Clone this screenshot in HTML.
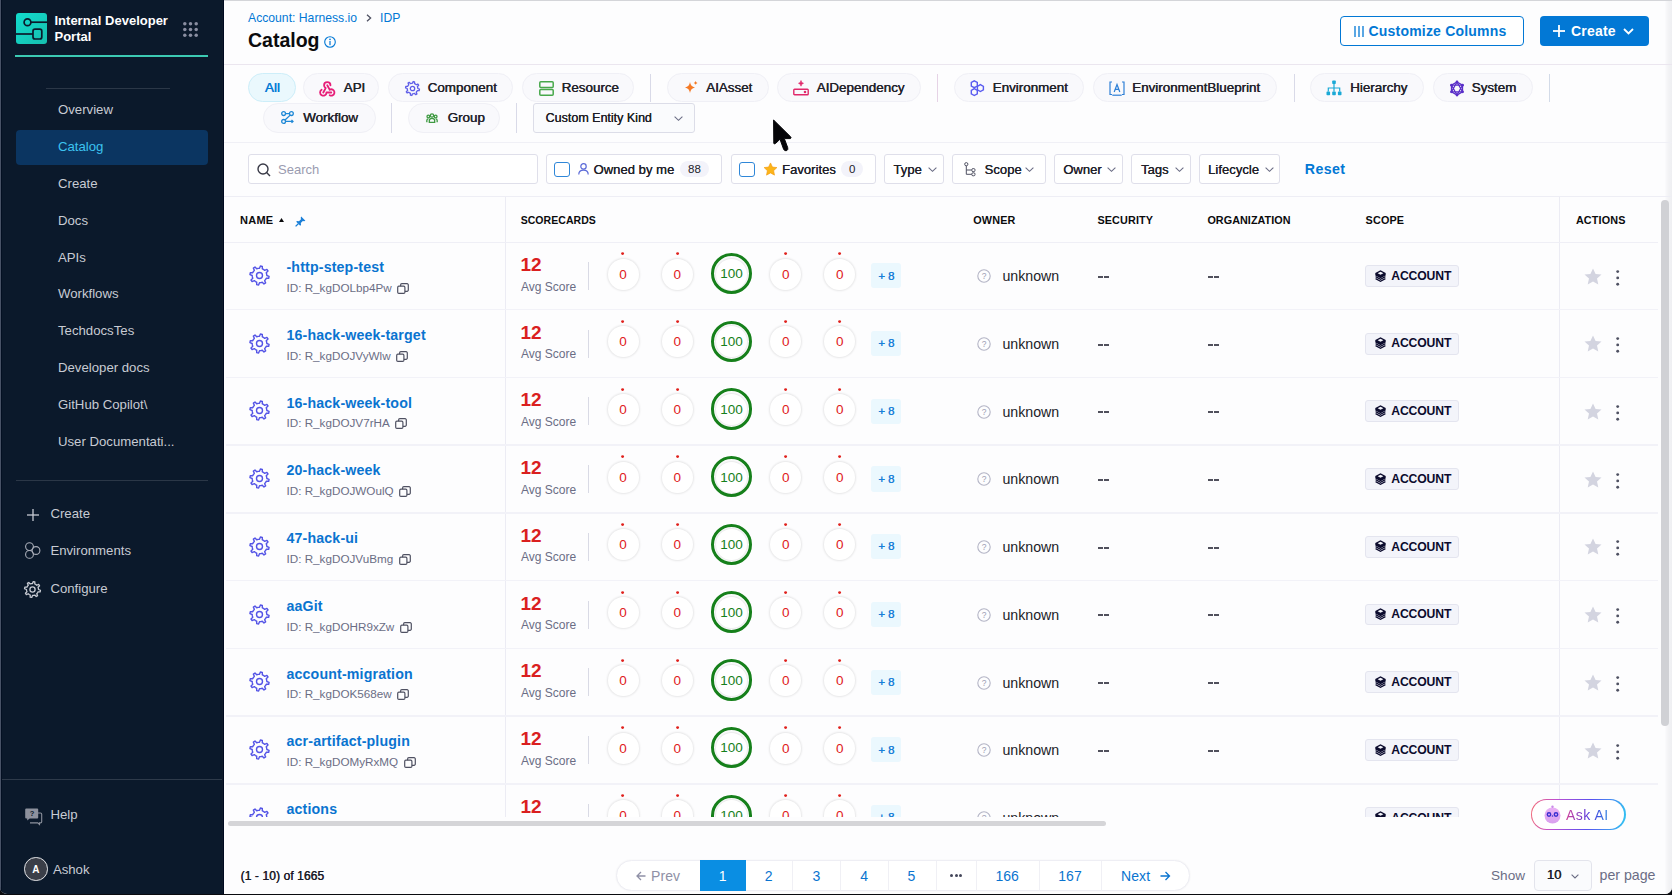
<!DOCTYPE html>
<html><head><meta charset="utf-8">
<style>
*{box-sizing:border-box;margin:0;padding:0}
html,body{width:1672px;height:895px;overflow:hidden;background:#0a0b0f;font-family:"Liberation Sans",sans-serif}
.abs{position:absolute}
.t{position:absolute;white-space:nowrap;line-height:1}
#win{position:absolute;left:0;top:0;width:1672px;height:894px;background:#fdfdfe;border-radius:0 0 7px 7px;overflow:hidden}
#side{position:absolute;left:0;top:0;width:224px;height:894px;background:#0b192b}
svg{position:absolute;overflow:visible}
</style></head><body>
<div id="win">
<div id="side">
<svg style="left:16px;top:13px" width="31" height="31" viewBox="0 0 31 31">
 <defs><linearGradient id="lg" x1="0" y1="0" x2="1" y2="1"><stop offset="0" stop-color="#12dccd"/><stop offset="1" stop-color="#16bfae"/></linearGradient></defs>
 <rect x="0" y="0" width="31" height="31" rx="3" fill="url(#lg)"/>
 <circle cx="11.5" cy="9.2" r="3.4" fill="none" stroke="#0b192b" stroke-width="1.7"/>
 <line x1="14.9" y1="9.2" x2="31" y2="9.2" stroke="#0b192b" stroke-width="1.7"/>
 <rect x="17" y="16.2" width="8.8" height="9.8" rx="2" fill="none" stroke="#0b192b" stroke-width="1.7"/>
 <line x1="0" y1="21" x2="17" y2="21" stroke="#0b192b" stroke-width="1.7"/>
</svg>
<div class="t" style="left:54.50px;top:14.30px;font-size:13px;color:#ffffff;font-weight:bold;">Internal Developer</div>
<div class="t" style="left:54.50px;top:30.10px;font-size:13px;color:#ffffff;font-weight:bold;">Portal</div>
<svg style="left:183px;top:22px" width="15" height="15" viewBox="0 0 15 15" fill="#8a8ea1"><circle cx="1.8" cy="1.8" r="1.75"/><circle cx="1.8" cy="7.5" r="1.75"/><circle cx="1.8" cy="13.2" r="1.75"/><circle cx="7.5" cy="1.8" r="1.75"/><circle cx="7.5" cy="7.5" r="1.75"/><circle cx="7.5" cy="13.2" r="1.75"/><circle cx="13.2" cy="1.8" r="1.75"/><circle cx="13.2" cy="7.5" r="1.75"/><circle cx="13.2" cy="13.2" r="1.75"/></svg>
<div class="abs" style="left:15px;top:55px;width:193px;height:2px;background:#3ccab3"></div>
<div class="abs" style="left:46px;top:88px;width:124px;height:1px;background:#2b3747"></div>
<div class="abs" style="left:15.5px;top:129.6px;width:192.5px;height:35px;background:#0b3561;border-radius:4px"></div>
<div class="t" style="left:58.00px;top:103.43px;font-size:13.2px;color:#c8cbd3;">Overview</div>
<div class="t" style="left:58.00px;top:140.23px;font-size:13.2px;color:#3cc3f0;">Catalog</div>
<div class="t" style="left:58.00px;top:177.03px;font-size:13.2px;color:#c8cbd3;">Create</div>
<div class="t" style="left:58.00px;top:213.83px;font-size:13.2px;color:#c8cbd3;">Docs</div>
<div class="t" style="left:58.00px;top:250.63px;font-size:13.2px;color:#c8cbd3;">APIs</div>
<div class="t" style="left:58.00px;top:287.43px;font-size:13.2px;color:#c8cbd3;">Workflows</div>
<div class="t" style="left:58.00px;top:324.23px;font-size:13.2px;color:#c8cbd3;">TechdocsTes</div>
<div class="t" style="left:58.00px;top:361.03px;font-size:13.2px;color:#c8cbd3;">Developer docs</div>
<div class="t" style="left:58.00px;top:397.83px;font-size:13.2px;color:#c8cbd3;">GitHub Copilot\</div>
<div class="t" style="left:58.00px;top:434.63px;font-size:13.2px;color:#c8cbd3;">User Documentati...</div>
<div class="abs" style="left:15.5px;top:480px;width:192.5px;height:1px;background:#2b3747"></div>
<svg style="left:26px;top:508px" width="14" height="14" viewBox="0 0 14 14" stroke="#c8cbd3" stroke-width="1.3"><line x1="7" y1="1" x2="7" y2="13"/><line x1="1" y1="7" x2="13" y2="7"/></svg>
<div class="t" style="left:50.40px;top:507.23px;font-size:13.2px;color:#c8cbd3;">Create</div>
<svg style="left:24px;top:542px" width="17" height="17" viewBox="0 0 17 17" fill="none" stroke="#a9adb8" stroke-width="1.1"><circle cx="5.5" cy="4.6" r="3.9"/><circle cx="12" cy="8.5" r="3.9"/><circle cx="5.5" cy="12.4" r="3.9"/></svg>
<div class="t" style="left:50.40px;top:544.03px;font-size:13.2px;color:#c8cbd3;">Environments</div>
<svg style="left:24px;top:581px" width="17" height="17" viewBox="0 0 17 17"><path d="M14.50,8.50 L16.46,9.25 L16.15,10.85 L14.04,10.80 L13.49,11.83 L12.74,12.74 L13.60,14.66 L12.24,15.57 L10.80,14.04 L9.67,14.38 L8.50,14.50 L7.75,16.46 L6.15,16.15 L6.20,14.04 L5.17,13.49 L4.26,12.74 L2.34,13.60 L1.43,12.24 L2.96,10.80 L2.62,9.67 L2.50,8.50 L0.54,7.75 L0.85,6.15 L2.96,6.20 L3.51,5.17 L4.26,4.26 L3.40,2.34 L4.76,1.43 L6.20,2.96 L7.33,2.62 L8.50,2.50 L9.25,0.54 L10.85,0.85 L10.80,2.96 L11.83,3.51 L12.74,4.26 L14.66,3.40 L15.57,4.76 L14.04,6.20 L14.38,7.33Z" fill="none" stroke="#c8cbd3" stroke-width="1.3" stroke-linejoin="round"/><circle cx="8.5" cy="8.5" r="2.6" fill="none" stroke="#c8cbd3" stroke-width="1.3"/></svg>
<div class="t" style="left:50.40px;top:582.33px;font-size:13.2px;color:#c8cbd3;">Configure</div>
<div class="abs" style="left:0px;top:778.5px;width:224px;height:1px;background:#2e3a4a"></div>
<svg style="left:25px;top:808px" width="18" height="17" viewBox="0 0 18 17">
 <path d="M5,5 h10.5 a1.2,1.2 0 0 1 1.2,1.2 v7.5 a1.2,1.2 0 0 1 -1.2,1.2 h-1 v1.6 l-1.8,-1.6 h-7.7" fill="none" stroke="#8d919d" stroke-width="1.1"/>
 <path d="M1.2,0.5 h11 a1,1 0 0 1 1,1 v8 a1,1 0 0 1 -1,1 h-7.5 l-2.5,2 v-2 h-1 a1,1 0 0 1 -1,-1 v-8 a1,1 0 0 1 1,-1z" fill="#8d919d"/>
 <text x="7" y="8.3" font-size="7.5" font-weight="bold" text-anchor="middle" fill="#0b192b" font-family="Liberation Sans">?</text>
</svg>
<div class="t" style="left:50.50px;top:808.23px;font-size:13.2px;color:#c8cbd3;">Help</div>
<div class="abs" style="left:24px;top:857px;width:23.5px;height:23.5px;border-radius:50%;border:1.6px solid #e6e7ea;background:#3a3e48"></div>
<div class="t" style="left:-64.25px;width:200px;text-align:center;top:864.53px;font-size:10px;color:#ffffff;font-weight:bold;">A</div>
<div class="t" style="left:52.90px;top:862.63px;font-size:13.2px;color:#c8cbd3;">Ashok</div>
<div class="abs" style="left:0px;top:0px;width:1px;height:894px;background:#485266"></div>
<div class="abs" style="left:1px;top:0px;width:1px;height:894px;background:#030f22"></div>
<div class="abs" style="left:221.5px;top:0px;width:1.5px;height:894px;background:#0f1b2a"></div>
<div class="abs" style="left:223px;top:0px;width:1px;height:894px;background:#000a20"></div>
</div>
<div class="abs" style="left:224px;top:0px;width:1448px;height:1px;background:#d4d5d9"></div>
<div class="abs" style="left:1664.5px;top:1px;width:7.5px;height:893px;background:linear-gradient(90deg,#fbfbfd,#f4f4f6 40%,#eeeff2)"></div>
<div class="t" style="left:248.00px;top:11.87px;font-size:12.2px;color:#0278d5;">Account: Harness.io</div>
<svg style="left:366px;top:14px" width="6" height="8" viewBox="0 0 6 8"><path d="M1,0.8 L4.6,4 L1,7.2" fill="none" stroke="#4f5162" stroke-width="1.3"/></svg>
<div class="t" style="left:380.00px;top:11.87px;font-size:12.2px;color:#0278d5;">IDP</div>
<div class="t" style="left:248.00px;top:30.59px;font-size:19.5px;color:#0b0b0d;font-weight:bold;">Catalog</div>
<svg style="left:323.5px;top:35.5px" width="12" height="12" viewBox="0 0 12 12"><circle cx="6" cy="6" r="5.3" fill="none" stroke="#0278d5" stroke-width="1.1"/><circle cx="6" cy="3.4" r="0.8" fill="#0278d5"/><rect x="5.4" y="5" width="1.2" height="4.2" fill="#0278d5"/></svg>
<div class="abs" style="left:1340.3px;top:15.5px;width:184px;height:30.5px;border:1.5px solid #0278d5;border-radius:4px;background:#fff"></div>
<svg style="left:1353.5px;top:25.5px" width="10" height="11" viewBox="0 0 10 11" stroke="#0278d5" stroke-width="1.3"><line x1="1" y1="0" x2="1" y2="11"/><line x1="5" y1="0" x2="5" y2="11"/><line x1="9" y1="0" x2="9" y2="11"/></svg>
<div class="t" style="left:1368.50px;top:23.75px;font-size:14px;color:#0278d5;font-weight:bold;letter-spacing:0.2px;">Customize Columns</div>
<div class="abs" style="left:1540.2px;top:15.5px;width:108.5px;height:30.5px;background:#0278d5;border-radius:4px"></div>
<svg style="left:1553px;top:24.5px" width="12" height="12" viewBox="0 0 12 12" stroke="#fff" stroke-width="1.8"><line x1="6" y1="0" x2="6" y2="12"/><line x1="0" y1="6" x2="12" y2="6"/></svg>
<div class="t" style="left:1571.00px;top:23.75px;font-size:14px;color:#ffffff;font-weight:bold;letter-spacing:0.2px;">Create</div>
<svg style="left:1623px;top:27.5px" width="11" height="7" viewBox="0 0 11 7"><path d="M1,1 L5.5,5.5 L10,1" fill="none" stroke="#fff" stroke-width="1.8"/></svg>
<div class="abs" style="left:224px;top:64px;width:1448px;height:1.2px;background:#ebe6ef"></div>
<div class="abs" style="left:248px;top:73.2px;width:48px;height:29.0px;background:#eaf8fd;border:1px solid #cdeef9;border-radius:16px"></div>
<div class="t" style="left:264.80px;top:81.46px;font-size:13.4px;color:#0278d5;text-shadow:0.45px 0 0 currentColor;">All</div>
<div class="abs" style="left:303.3px;top:73.2px;width:76.19999999999999px;height:29.0px;background:#f9f9fc;border:1px solid #f0f0f6;border-radius:16px"></div>
<svg style="left:320px;top:80.8px" width="15" height="14.5" viewBox="3 2.6 18.6 18.2" fill="none" stroke="#e71e78" stroke-width="2.3" stroke-linecap="round" stroke-linejoin="round"><path d="M4.876 13.61a4 4 0 1 0 6.124 3.39h6"/><path d="M15.066 20.502a4 4 0 1 0 1.934 -7.502c-.706 0 -1.424 .179 -2 .5l-3 -5.5"/><path d="M16 8a4 4 0 1 0 -8 0c0 1.506 .77 2.818 2 3.5l-3 5.5"/></svg>
<div class="t" style="left:343.50px;top:81.46px;font-size:13.4px;color:#22222a;text-shadow:0.45px 0 0 currentColor;">API</div>
<div class="abs" style="left:387.7px;top:73.2px;width:125.69999999999999px;height:29.0px;background:#f9f9fc;border:1px solid #f0f0f6;border-radius:16px"></div>
<svg style="left:404.5px;top:80.5px" width="15" height="15" viewBox="0 0 15 15"><path d="M12.80,7.50 L14.47,8.16 L14.19,9.56 L12.40,9.53 L11.91,10.44 L11.25,11.25 L11.96,12.89 L10.78,13.69 L9.53,12.40 L8.53,12.70 L7.50,12.80 L6.84,14.47 L5.44,14.19 L5.47,12.40 L4.56,11.91 L3.75,11.25 L2.11,11.96 L1.31,10.78 L2.60,9.53 L2.30,8.53 L2.20,7.50 L0.53,6.84 L0.81,5.44 L2.60,5.47 L3.09,4.56 L3.75,3.75 L3.04,2.11 L4.22,1.31 L5.47,2.60 L6.47,2.30 L7.50,2.20 L8.16,0.53 L9.56,0.81 L9.53,2.60 L10.44,3.09 L11.25,3.75 L12.89,3.04 L13.69,4.22 L12.40,5.47 L12.70,6.47Z" fill="none" stroke="#5f5ee8" stroke-width="1.3" stroke-linejoin="round"/><circle cx="7.5" cy="7.5" r="2.2" fill="none" stroke="#5f5ee8" stroke-width="1.3"/></svg>
<div class="t" style="left:427.50px;top:81.46px;font-size:13.4px;color:#22222a;text-shadow:0.45px 0 0 currentColor;">Component</div>
<div class="abs" style="left:522px;top:73.2px;width:111.60000000000002px;height:29.0px;background:#f9f9fc;border:1px solid #f0f0f6;border-radius:16px"></div>
<svg style="left:538.5px;top:80.5px" width="15" height="15" viewBox="0 0 15 15" fill="none" stroke="#47a84a" stroke-width="1.5"><rect x="0.8" y="0.8" width="13.4" height="5.8" rx="1"/><rect x="0.8" y="8.4" width="13.4" height="5.8" rx="1"/></svg>
<div class="t" style="left:561.50px;top:81.46px;font-size:13.4px;color:#22222a;text-shadow:0.45px 0 0 currentColor;">Resource</div>
<div class="abs" style="left:650.2px;top:73.7px;width:1px;height:28.299999999999997px;background:#d9dae8"></div>
<div class="abs" style="left:666.6px;top:73.2px;width:102.19999999999993px;height:29.0px;background:#f9f9fc;border:1px solid #f0f0f6;border-radius:16px"></div>
<svg style="left:684.5px;top:81px" width="13" height="13" viewBox="0 0 13 13" fill="#f57a25"><path d="M5,1 Q5.6,5.6 10,6.5 Q5.6,7.4 5,12 Q4.4,7.4 0,6.5 Q4.4,5.6 5,1Z"/><path d="M10.6,0 Q10.9,1.6 12.5,1.9 Q10.9,2.2 10.6,3.8 Q10.3,2.2 8.7,1.9 Q10.3,1.6 10.6,0Z"/></svg>
<div class="t" style="left:706.00px;top:81.46px;font-size:13.4px;color:#22222a;text-shadow:0.45px 0 0 currentColor;">AIAsset</div>
<div class="abs" style="left:776.9px;top:73.2px;width:144.10000000000002px;height:29.0px;background:#f9f9fc;border:1px solid #f0f0f6;border-radius:16px"></div>
<svg style="left:792.5px;top:79.5px" width="16" height="16" viewBox="0 0 16 16" fill="none" stroke="#e0286a" stroke-width="1.4"><rect x="0.8" y="9.2" width="14.4" height="5.6" rx="0.8"/><circle cx="12" cy="12" r="0.6" fill="#e0286a"/><path d="M8,0.5 Q8.3,3 10.5,3.3 Q8.3,3.6 8,6.2 Q7.7,3.6 5.5,3.3 Q7.7,3 8,0.5Z" fill="#e0286a" stroke-width="0.6"/></svg>
<div class="t" style="left:816.50px;top:81.46px;font-size:13.4px;color:#22222a;text-shadow:0.45px 0 0 currentColor;">AIDependency</div>
<div class="abs" style="left:936.9px;top:73.7px;width:1px;height:28.299999999999997px;background:#e6d3e6"></div>
<div class="abs" style="left:953.5px;top:73.2px;width:130.29999999999995px;height:29.0px;background:#f9f9fc;border:1px solid #f0f0f6;border-radius:16px"></div>
<svg style="left:969px;top:79.5px" width="17" height="17" viewBox="0 0 17 17" fill="none" stroke="#5a5cf0" stroke-width="1.4"><path d="M5.3,0.8 L8.3,2.5 L8.3,6 L5.3,7.7 L2.3,6 L2.3,2.5Z"/><path d="M11.4,4.6 L14.4,6.3 L14.4,9.8 L11.4,11.5 L8.4,9.8 L8.4,6.3Z"/><path d="M5.3,8.6 L8.3,10.3 L8.3,13.8 L5.3,15.5 L2.3,13.8 L2.3,10.3Z"/></svg>
<div class="t" style="left:992.50px;top:81.46px;font-size:13.4px;color:#22222a;text-shadow:0.45px 0 0 currentColor;">Environment</div>
<div class="abs" style="left:1092.5px;top:73.2px;width:184.9000000000001px;height:29.0px;background:#f9f9fc;border:1px solid #f0f0f6;border-radius:16px"></div>
<svg style="left:1108.5px;top:80.5px" width="16" height="15" viewBox="0 0 16 15" fill="none" stroke="#2d7fd6" stroke-width="1.2"><path d="M3,1 H1 V13.5 H3 M13,1 H15 V13.5 H13"/><path d="M5.2,11 L8,3.5 L10.8,11 M6.2,8.4 H9.8"/><path d="M3.3,14.2 L12.7,14.2"/></svg>
<div class="t" style="left:1132.00px;top:81.46px;font-size:13.4px;color:#22222a;text-shadow:0.45px 0 0 currentColor;">EnvironmentBlueprint</div>
<div class="abs" style="left:1293.7px;top:73.7px;width:1px;height:28.299999999999997px;background:#d9dae8"></div>
<div class="abs" style="left:1310px;top:73.2px;width:113.70000000000005px;height:29.0px;background:#f9f9fc;border:1px solid #f0f0f6;border-radius:16px"></div>
<svg style="left:1326px;top:80px" width="16" height="16" viewBox="0 0 16 16" fill="#1aa9d6"><rect x="6.2" y="0.5" width="3.6" height="3.6" rx="0.8"/><rect x="0.5" y="11.6" width="3.6" height="3.6" rx="0.8"/><rect x="6.2" y="11.6" width="3.6" height="3.6" rx="0.8"/><rect x="11.9" y="11.6" width="3.6" height="3.6" rx="0.8"/><path d="M8,4 V11.6 M2.3,11.6 V8 H13.7 V11.6" fill="none" stroke="#1aa9d6" stroke-width="1.2"/></svg>
<div class="t" style="left:1350.00px;top:81.46px;font-size:13.4px;color:#22222a;text-shadow:0.45px 0 0 currentColor;">Hierarchy</div>
<div class="abs" style="left:1432.5px;top:73.2px;width:100.0px;height:29.0px;background:#f9f9fc;border:1px solid #f0f0f6;border-radius:16px"></div>
<svg style="left:1449.5px;top:80.5px" width="14" height="15" viewBox="0 0 14 15" fill="none" stroke="#5a2fc8" stroke-width="1.3"><path d="M7,1 L12.5,4.2 L12.5,10.8 L7,14 L1.5,10.8 L1.5,4.2Z"/><path d="M7,1 L12.5,10.8 L1.5,10.8Z M7,14 L1.5,4.2 L12.5,4.2Z"/><g fill="#5a2fc8" stroke="none"><circle cx="7" cy="1" r="1.4"/><circle cx="12.5" cy="4.2" r="1.4"/><circle cx="12.5" cy="10.8" r="1.4"/><circle cx="7" cy="14" r="1.4"/><circle cx="1.5" cy="10.8" r="1.4"/><circle cx="1.5" cy="4.2" r="1.4"/></g></svg>
<div class="t" style="left:1471.50px;top:81.46px;font-size:13.4px;color:#22222a;text-shadow:0.45px 0 0 currentColor;">System</div>
<div class="abs" style="left:1548.9px;top:73.7px;width:1px;height:28.299999999999997px;background:#d3dbe8"></div>
<div class="abs" style="left:263.4px;top:102.5px;width:112.30000000000001px;height:30.19999999999999px;background:#f9f9fc;border:1px solid #f0f0f6;border-radius:16px"></div>
<svg style="left:281px;top:110.5px" width="13" height="13" viewBox="0 0 13 13" fill="none" stroke="#1e88d6" stroke-width="1.3"><circle cx="2.6" cy="2.6" r="1.9"/><circle cx="10.4" cy="2.6" r="1.9"/><circle cx="2.6" cy="10.4" r="1.9"/><path d="M4.5,2.6 H8.5 M9.2,4.1 L4,9 M4.5,10.4 H12 M10.5,8.9 L12,10.4 L10.5,11.9"/></svg>
<div class="t" style="left:303.00px;top:111.26px;font-size:13.4px;color:#22222a;text-shadow:0.45px 0 0 currentColor;">Workflow</div>
<div class="abs" style="left:391.1px;top:103px;width:1px;height:30px;background:#d9dae8"></div>
<div class="abs" style="left:408.3px;top:102.5px;width:92.19999999999999px;height:30.19999999999999px;background:#f9f9fc;border:1px solid #f0f0f6;border-radius:16px"></div>
<svg style="left:426px;top:113px" width="12" height="10" viewBox="0 0 14 12" fill="none" stroke="#3f9a42" stroke-width="1.6"><circle cx="7" cy="3" r="2"/><circle cx="2.6" cy="4.2" r="1.6"/><circle cx="11.4" cy="4.2" r="1.6"/><path d="M3.8,11.2 V9 Q3.8,6.4 7,6.4 Q10.2,6.4 10.2,9 V11.2Z"/><path d="M0.8,11 V9 Q0.8,7 2.6,7 M13.2,11 V9 Q13.2,7 11.4,7"/></svg>
<div class="t" style="left:447.50px;top:111.26px;font-size:13.4px;color:#22222a;text-shadow:0.45px 0 0 currentColor;">Group</div>
<div class="abs" style="left:515.9px;top:103px;width:1px;height:30px;background:#d9dae8"></div>
<div class="abs" style="left:533.4px;top:102.5px;width:161.2px;height:30.2px;background:#fafbfd;border:1px solid #dcdde8;border-radius:3px"></div>
<div class="t" style="left:545.50px;top:112.02px;font-size:12.5px;color:#1c1c24;text-shadow:0.25px 0 0 currentColor;">Custom Entity Kind</div>
<svg style="left:674px;top:116px" width="9" height="5" viewBox="0 0 9 5"><path d="M0.6,0.6 L4.5,4.3 L8.4,0.6" fill="none" stroke="#6b6d85" stroke-width="1.1"/></svg>
<div class="abs" style="left:224px;top:141.5px;width:1448px;height:1px;background:#f0f0f6"></div>
<div class="abs" style="left:248px;top:154px;width:289.6px;height:30.2px;background:#fff;border:1px solid #dfdfea;border-radius:3px"></div>
<svg style="left:256.5px;top:162.5px" width="14" height="14" viewBox="0 0 14 14" fill="none" stroke="#383946" stroke-width="1.4"><circle cx="6" cy="6" r="5"/><line x1="9.6" y1="9.6" x2="13" y2="13"/></svg>
<div class="t" style="left:278.00px;top:162.80px;font-size:13px;color:#9a9bb0;">Search</div>
<div class="abs" style="left:546.1px;top:154px;width:175.5px;height:30.2px;background:#fff;border:1px solid #dfdfea;border-radius:3px"></div>
<div class="abs" style="left:554.2px;top:161.5px;width:16px;height:15px;border:1.5px solid #2f87d8;border-radius:3px;background:#fff"></div>
<svg style="left:578px;top:162.5px" width="11" height="12" viewBox="0 0 11 12" fill="none" stroke="#5b6ad8" stroke-width="1.2"><circle cx="5.5" cy="3.4" r="2.7"/><path d="M0.8,11.5 Q0.8,7.2 5.5,7.2 Q10.2,7.2 10.2,11.5"/></svg>
<div class="t" style="left:593.50px;top:162.80px;font-size:13px;color:#22222a;letter-spacing:0.05px;text-shadow:0.2px 0 0 currentColor;">Owned by me</div>
<div class="abs" style="left:679.9px;top:161px;width:29.3px;height:16px;background:#f3f3fa;border-radius:8px"></div>
<div class="t" style="left:594.50px;width:200px;text-align:center;top:163.57px;font-size:11.5px;color:#22222a;">88</div>
<div class="abs" style="left:730.5px;top:154px;width:145px;height:30.2px;background:#fff;border:1px solid #dfdfea;border-radius:3px"></div>
<div class="abs" style="left:739px;top:161.5px;width:15.5px;height:15px;border:1.5px solid #2f87d8;border-radius:3px;background:#fff"></div>
<svg style="left:762.5px;top:161.5px" width="15" height="15" viewBox="0 0 24 24"><path d="M12,1.5 L15.1,8.1 L22.3,8.9 L17,13.8 L18.4,21 L12,17.4 L5.6,21 L7,13.8 L1.7,8.9 L8.9,8.1Z" fill="#fcb519" stroke="#f29a12" stroke-width="1"/></svg>
<div class="t" style="left:782.00px;top:162.80px;font-size:13px;color:#22222a;letter-spacing:0.05px;text-shadow:0.2px 0 0 currentColor;">Favorites</div>
<div class="abs" style="left:841px;top:161px;width:22.3px;height:16px;background:#f3f3fa;border-radius:8px"></div>
<div class="t" style="left:752.20px;width:200px;text-align:center;top:163.57px;font-size:11.5px;color:#22222a;">0</div>
<div class="abs" style="left:884.3px;top:154px;width:59.40000000000009px;height:30.2px;background:#fff;border:1px solid #dfdfea;border-radius:3px"></div>
<div class="t" style="left:893.40px;top:162.80px;font-size:13px;color:#22222a;letter-spacing:0.05px;text-shadow:0.2px 0 0 currentColor;">Type</div>
<svg style="left:928px;top:167px" width="9" height="5" viewBox="0 0 9 5"><path d="M0.6,0.6 L4.5,4.3 L8.4,0.6" fill="none" stroke="#6b6d85" stroke-width="1.1"/></svg>
<div class="abs" style="left:952.3px;top:154px;width:93.29999999999995px;height:30.2px;background:#fff;border:1px solid #dfdfea;border-radius:3px"></div>
<svg style="left:963.5px;top:161.5px" width="12" height="15" viewBox="0 0 12 15" fill="none" stroke="#4f5162" stroke-width="1"><circle cx="2.3" cy="2.2" r="1.6"/><path d="M2.3,3.8 V12.3 H7.7 M2.3,8 H7.7"/><rect x="7.8" y="6.6" width="3.2" height="3" rx="1.2"/><rect x="7.8" y="10.8" width="3.2" height="3" rx="1.2"/></svg>
<div class="t" style="left:984.60px;top:162.80px;font-size:13px;color:#22222a;letter-spacing:0.05px;text-shadow:0.2px 0 0 currentColor;">Scope</div>
<svg style="left:1025px;top:167px" width="9" height="5" viewBox="0 0 9 5"><path d="M0.6,0.6 L4.5,4.3 L8.4,0.6" fill="none" stroke="#6b6d85" stroke-width="1.1"/></svg>
<div class="abs" style="left:1053.8px;top:154px;width:68.90000000000009px;height:30.2px;background:#fff;border:1px solid #dfdfea;border-radius:3px"></div>
<div class="t" style="left:1063.20px;top:162.80px;font-size:13px;color:#22222a;letter-spacing:0.05px;text-shadow:0.2px 0 0 currentColor;">Owner</div>
<svg style="left:1107px;top:167px" width="9" height="5" viewBox="0 0 9 5"><path d="M0.6,0.6 L4.5,4.3 L8.4,0.6" fill="none" stroke="#6b6d85" stroke-width="1.1"/></svg>
<div class="abs" style="left:1131.2px;top:154px;width:59.59999999999991px;height:30.2px;background:#fff;border:1px solid #dfdfea;border-radius:3px"></div>
<div class="t" style="left:1141.00px;top:162.80px;font-size:13px;color:#22222a;letter-spacing:0.05px;text-shadow:0.2px 0 0 currentColor;">Tags</div>
<svg style="left:1174.5px;top:167px" width="9" height="5" viewBox="0 0 9 5"><path d="M0.6,0.6 L4.5,4.3 L8.4,0.6" fill="none" stroke="#6b6d85" stroke-width="1.1"/></svg>
<div class="abs" style="left:1199.3px;top:154px;width:81.20000000000005px;height:30.2px;background:#fff;border:1px solid #dfdfea;border-radius:3px"></div>
<div class="t" style="left:1208.00px;top:162.80px;font-size:13px;color:#22222a;letter-spacing:0.05px;text-shadow:0.2px 0 0 currentColor;">Lifecycle</div>
<svg style="left:1265px;top:167px" width="9" height="5" viewBox="0 0 9 5"><path d="M0.6,0.6 L4.5,4.3 L8.4,0.6" fill="none" stroke="#6b6d85" stroke-width="1.1"/></svg>
<div class="t" style="left:1304.80px;top:161.98px;font-size:14.2px;color:#0278d5;font-weight:bold;letter-spacing:0.4px;">Reset</div>
<div class="abs" style="left:224px;top:196px;width:1448px;height:1px;background:#eeeef5"></div>
<div class="t" style="left:240.00px;top:214.59px;font-size:11px;color:#0b0b0d;font-weight:bold;letter-spacing:0.25px;">NAME</div>
<svg style="left:279px;top:217.5px" width="5" height="4" viewBox="0 0 5 4"><path d="M0,4 L2.5,0 L5,4Z" fill="#0b0b0d"/></svg>
<svg style="left:294.5px;top:215.5px" width="11" height="11" viewBox="0 0 11 11"><path d="M6.2,0.6 L10.4,4.8 L9.2,5.3 L7.8,5 L5.8,7 L6,9 L5.2,9.8 L1.2,5.8 L2,5 L4,5.2 L6,3.2 L5.7,1.8Z" fill="#1a7fd8"/><line x1="3.3" y1="7.7" x2="0.6" y2="10.4" stroke="#1a7fd8" stroke-width="1.3"/></svg>
<div class="t" style="left:520.70px;top:215.01px;font-size:10.5px;color:#0b0b0d;font-weight:bold;letter-spacing:0.05px;">SCORECARDS</div>
<div class="t" style="left:973.30px;top:214.76px;font-size:10.8px;color:#0b0b0d;font-weight:bold;letter-spacing:0.15px;">OWNER</div>
<div class="t" style="left:1097.40px;top:214.76px;font-size:10.8px;color:#0b0b0d;font-weight:bold;letter-spacing:0.15px;">SECURITY</div>
<div class="t" style="left:1207.40px;top:214.76px;font-size:10.8px;color:#0b0b0d;font-weight:bold;letter-spacing:0.05px;">ORGANIZATION</div>
<div class="t" style="left:1365.60px;top:214.76px;font-size:10.8px;color:#0b0b0d;font-weight:bold;letter-spacing:0.15px;">SCOPE</div>
<div class="t" style="left:1575.90px;top:214.76px;font-size:10.8px;color:#0b0b0d;font-weight:bold;letter-spacing:0.15px;">ACTIONS</div>
<div class="abs" style="left:224px;top:197px;width:1441px;height:620px;overflow:hidden">
<div class="abs" style="left:281px;top:0px;width:1px;height:621px;background:#ececf4"></div>
<div class="abs" style="left:1335px;top:0px;width:1px;height:621px;background:#ececf4"></div>
<div class="abs" style="left:0px;top:44.5px;width:1434px;height:1px;background:#efeff6"></div>
<svg style="left:24.50px;top:68.00px" width="21" height="21" viewBox="0 0 21 21" ><path d="M17.80,10.50 L20.06,11.40 L19.68,13.32 L17.24,13.29 L16.57,14.56 L15.66,15.66 L16.62,17.90 L14.99,18.98 L13.29,17.24 L11.92,17.66 L10.50,17.80 L9.60,20.06 L7.68,19.68 L7.71,17.24 L6.44,16.57 L5.34,15.66 L3.10,16.62 L2.02,14.99 L3.76,13.29 L3.34,11.92 L3.20,10.50 L0.94,9.60 L1.32,7.68 L3.76,7.71 L4.43,6.44 L5.34,5.34 L4.38,3.10 L6.01,2.02 L7.71,3.76 L9.08,3.34 L10.50,3.20 L11.40,0.94 L13.32,1.32 L13.29,3.76 L14.56,4.43 L15.66,5.34 L17.90,4.38 L18.98,6.01 L17.24,7.71 L17.66,9.08Z" fill="none" stroke="#5454e6" stroke-width="1.4" stroke-linejoin="round"/><circle cx="10.5" cy="10.5" r="3.0" fill="none" stroke="#5454e6" stroke-width="1.4"/></svg>
<div class="t" style="left:62.50px;top:63.28px;font-size:14.2px;color:#0a74d0;font-weight:bold;letter-spacing:0.15px;">-http-step-test</div>
<div class="t" style="left:62.50px;top:85.00px;font-size:11.7px;color:#6b6d85;">ID: R_kgDOLbp4Pw</div>
<div class="abs" style="left:62.5px;top:84.89999999999998px;height:12px;white-space:nowrap;font-size:11.7px;line-height:12px;color:transparent">ID: R_kgDOLbp4Pw<svg style="position:relative;left:5.5px;top:1px;display:inline-block" width="12" height="11" viewBox="0 0 12 11"><rect x="0.7" y="3.2" width="7.2" height="7.2" rx="1.2" fill="none" stroke="#4f5162" stroke-width="1.2"/><path d="M3.6,3.2 V1.9 A1.2,1.2 0 0 1 4.8,0.7 H10.1 A1.2,1.2 0 0 1 11.3,1.9 V7.1 A1.2,1.2 0 0 1 10.1,8.3 H7.9" fill="none" stroke="#4f5162" stroke-width="1.2"/></svg></div>
<div class="t" style="left:296.50px;top:58.02px;font-size:19px;color:#da1f1f;font-weight:bold;">12</div>
<div class="t" style="left:297.00px;top:83.54px;font-size:12px;color:#6b6d85;">Avg Score</div>
<div class="abs" style="left:363.5px;top:65.0px;width:1px;height:28px;background:#d9dae5"></div>
<div class="abs" style="left:383.5px;top:61.5px;width:31px;height:31px;border-radius:50%;background:#fff;box-shadow:0 0 2px 1px rgba(0,0,0,0.09)"></div>
<svg style="left:397.40px;top:55.20px" width="3.2" height="3.2" viewBox="0 0 3.2 3.2" ><circle cx="1.6" cy="1.6" r="1.45" fill="#e0201c"/></svg>
<div class="t" style="left:299.00px;width:200px;text-align:center;top:70.57px;font-size:13.5px;color:#e0201c;">0</div>
<div class="abs" style="left:437.7px;top:61.5px;width:31px;height:31px;border-radius:50%;background:#fff;box-shadow:0 0 2px 1px rgba(0,0,0,0.09)"></div>
<svg style="left:451.60px;top:55.20px" width="3.2" height="3.2" viewBox="0 0 3.2 3.2" ><circle cx="1.6" cy="1.6" r="1.45" fill="#e0201c"/></svg>
<div class="t" style="left:353.20px;width:200px;text-align:center;top:70.57px;font-size:13.5px;color:#e0201c;">0</div>
<div class="abs" style="left:546.3px;top:61.5px;width:31px;height:31px;border-radius:50%;background:#fff;box-shadow:0 0 2px 1px rgba(0,0,0,0.09)"></div>
<svg style="left:560.20px;top:55.20px" width="3.2" height="3.2" viewBox="0 0 3.2 3.2" ><circle cx="1.6" cy="1.6" r="1.45" fill="#e0201c"/></svg>
<div class="t" style="left:461.80px;width:200px;text-align:center;top:70.57px;font-size:13.5px;color:#e0201c;">0</div>
<div class="abs" style="left:600.2px;top:61.5px;width:31px;height:31px;border-radius:50%;background:#fff;box-shadow:0 0 2px 1px rgba(0,0,0,0.09)"></div>
<svg style="left:614.10px;top:55.20px" width="3.2" height="3.2" viewBox="0 0 3.2 3.2" ><circle cx="1.6" cy="1.6" r="1.45" fill="#e0201c"/></svg>
<div class="t" style="left:515.70px;width:200px;text-align:center;top:70.57px;font-size:13.5px;color:#e0201c;">0</div>
<div class="abs" style="left:492.0px;top:61.5px;width:31px;height:31px;border-radius:50%;background:#fff;box-shadow:0 0 2px 1px rgba(0,0,0,0.09)"></div>
<div class="abs" style="left:486.8px;top:55.8px;width:41.4px;height:41.4px;border-radius:50%;border:3.2px solid #16801b"></div>
<div class="t" style="left:407.50px;width:200px;text-align:center;top:70.37px;font-size:13.5px;color:#16801b;">100</div>
<div class="abs" style="left:647.2px;top:66.3px;width:30.2px;height:25.1px;background:#ebf8fe;border-radius:3px"></div>
<div class="t" style="left:562.30px;width:200px;text-align:center;top:73.57px;font-size:11.5px;color:#1a7fd8;text-shadow:0.3px 0 0 currentColor;">+ 8</div>
<svg style="left:753.00px;top:72.20px" width="14" height="14" viewBox="0 0 14 14" ><circle cx="7" cy="7" r="6.2" fill="none" stroke="#b4b5c6" stroke-width="1.1"/><text x="7" y="10" font-size="8.5" text-anchor="middle" fill="#9c9db2" font-family="Liberation Sans">?</text></svg>
<div class="t" style="left:778.40px;top:72.28px;font-size:14.2px;color:#1c1c28;">unknown</div>
<div class="abs" style="left:874px;top:79px;width:4.8px;height:2px;background:#50505c"></div>
<div class="abs" style="left:880.2px;top:79px;width:4.8px;height:2px;background:#50505c"></div>
<div class="abs" style="left:984px;top:79px;width:4.8px;height:2px;background:#50505c"></div>
<div class="abs" style="left:990.2px;top:79px;width:4.8px;height:2px;background:#50505c"></div>
<div class="abs" style="left:1141.2px;top:68.0px;width:93.4px;height:21.8px;background:#f3f4fa;border:1px solid #e4e5ef;border-radius:3px"></div>
<svg style="left:1150.50px;top:72.50px" width="11" height="12" viewBox="0 0 11 12" ><path d="M5.5,0.3 L10.7,3 L10.7,5.6 L5.5,8.3 L0.3,5.6 L0.3,3Z" fill="#0b0b2d"/><path d="M5.5,1.8 L8.4,3.3 L5.5,4.8 L2.6,3.3Z" fill="#f3f4fa"/><path d="M0.6,6.6 L5.5,9.2 L10.4,6.6 M0.6,8.6 L5.5,11.2 L10.4,8.6" fill="none" stroke="#0b0b2d" stroke-width="1.2"/></svg>
<div class="t" style="left:1167.30px;top:72.77px;font-size:12.2px;color:#0b0b2d;font-weight:bold;letter-spacing:-0.15px;">ACCOUNT</div>
<svg style="left:1360.00px;top:70.50px" width="18" height="17" viewBox="0 0 18 17" ><path d="M9,0.5 L11.6,6 L17.5,6.6 L13,10.6 L14.3,16.5 L9,13.4 L3.7,16.5 L5,10.6 L0.5,6.6 L6.4,6Z" fill="#d3d4e0"/></svg>
<svg style="left:1392.00px;top:72.60px" width="3.4" height="16" viewBox="0 0 3.4 16" ><circle cx="1.7" cy="1.6" r="1.45" fill="#4f5162"/><circle cx="1.7" cy="7.9" r="1.45" fill="#4f5162"/><circle cx="1.7" cy="14.2" r="1.45" fill="#4f5162"/></svg>
<div class="abs" style="left:2px;top:111.97px;width:1432px;height:1.5px;background:#f2f2f8"></div>
<svg style="left:24.50px;top:135.72px" width="21" height="21" viewBox="0 0 21 21" ><path d="M17.80,10.50 L20.06,11.40 L19.68,13.32 L17.24,13.29 L16.57,14.56 L15.66,15.66 L16.62,17.90 L14.99,18.98 L13.29,17.24 L11.92,17.66 L10.50,17.80 L9.60,20.06 L7.68,19.68 L7.71,17.24 L6.44,16.57 L5.34,15.66 L3.10,16.62 L2.02,14.99 L3.76,13.29 L3.34,11.92 L3.20,10.50 L0.94,9.60 L1.32,7.68 L3.76,7.71 L4.43,6.44 L5.34,5.34 L4.38,3.10 L6.01,2.02 L7.71,3.76 L9.08,3.34 L10.50,3.20 L11.40,0.94 L13.32,1.32 L13.29,3.76 L14.56,4.43 L15.66,5.34 L17.90,4.38 L18.98,6.01 L17.24,7.71 L17.66,9.08Z" fill="none" stroke="#5454e6" stroke-width="1.4" stroke-linejoin="round"/><circle cx="10.5" cy="10.5" r="3.0" fill="none" stroke="#5454e6" stroke-width="1.4"/></svg>
<div class="t" style="left:62.50px;top:131.00px;font-size:14.2px;color:#0a74d0;font-weight:bold;letter-spacing:0.15px;">16-hack-week-target</div>
<div class="t" style="left:62.50px;top:152.72px;font-size:11.7px;color:#6b6d85;">ID: R_kgDOJVyWlw</div>
<div class="abs" style="left:62.5px;top:152.62px;height:12px;white-space:nowrap;font-size:11.7px;line-height:12px;color:transparent">ID: R_kgDOJVyWlw<svg style="position:relative;left:5.5px;top:1px;display:inline-block" width="12" height="11" viewBox="0 0 12 11"><rect x="0.7" y="3.2" width="7.2" height="7.2" rx="1.2" fill="none" stroke="#4f5162" stroke-width="1.2"/><path d="M3.6,3.2 V1.9 A1.2,1.2 0 0 1 4.8,0.7 H10.1 A1.2,1.2 0 0 1 11.3,1.9 V7.1 A1.2,1.2 0 0 1 10.1,8.3 H7.9" fill="none" stroke="#4f5162" stroke-width="1.2"/></svg></div>
<div class="t" style="left:296.50px;top:125.74px;font-size:19px;color:#da1f1f;font-weight:bold;">12</div>
<div class="t" style="left:297.00px;top:151.26px;font-size:12px;color:#6b6d85;">Avg Score</div>
<div class="abs" style="left:363.5px;top:132.72px;width:1px;height:28px;background:#d9dae5"></div>
<div class="abs" style="left:383.5px;top:129.22px;width:31px;height:31px;border-radius:50%;background:#fff;box-shadow:0 0 2px 1px rgba(0,0,0,0.09)"></div>
<svg style="left:397.40px;top:122.92px" width="3.2" height="3.2" viewBox="0 0 3.2 3.2" ><circle cx="1.6" cy="1.6" r="1.45" fill="#e0201c"/></svg>
<div class="t" style="left:299.00px;width:200px;text-align:center;top:138.29px;font-size:13.5px;color:#e0201c;">0</div>
<div class="abs" style="left:437.7px;top:129.22px;width:31px;height:31px;border-radius:50%;background:#fff;box-shadow:0 0 2px 1px rgba(0,0,0,0.09)"></div>
<svg style="left:451.60px;top:122.92px" width="3.2" height="3.2" viewBox="0 0 3.2 3.2" ><circle cx="1.6" cy="1.6" r="1.45" fill="#e0201c"/></svg>
<div class="t" style="left:353.20px;width:200px;text-align:center;top:138.29px;font-size:13.5px;color:#e0201c;">0</div>
<div class="abs" style="left:546.3px;top:129.22px;width:31px;height:31px;border-radius:50%;background:#fff;box-shadow:0 0 2px 1px rgba(0,0,0,0.09)"></div>
<svg style="left:560.20px;top:122.92px" width="3.2" height="3.2" viewBox="0 0 3.2 3.2" ><circle cx="1.6" cy="1.6" r="1.45" fill="#e0201c"/></svg>
<div class="t" style="left:461.80px;width:200px;text-align:center;top:138.29px;font-size:13.5px;color:#e0201c;">0</div>
<div class="abs" style="left:600.2px;top:129.22px;width:31px;height:31px;border-radius:50%;background:#fff;box-shadow:0 0 2px 1px rgba(0,0,0,0.09)"></div>
<svg style="left:614.10px;top:122.92px" width="3.2" height="3.2" viewBox="0 0 3.2 3.2" ><circle cx="1.6" cy="1.6" r="1.45" fill="#e0201c"/></svg>
<div class="t" style="left:515.70px;width:200px;text-align:center;top:138.29px;font-size:13.5px;color:#e0201c;">0</div>
<div class="abs" style="left:492.0px;top:129.22px;width:31px;height:31px;border-radius:50%;background:#fff;box-shadow:0 0 2px 1px rgba(0,0,0,0.09)"></div>
<div class="abs" style="left:486.8px;top:123.52px;width:41.4px;height:41.4px;border-radius:50%;border:3.2px solid #16801b"></div>
<div class="t" style="left:407.50px;width:200px;text-align:center;top:138.09px;font-size:13.5px;color:#16801b;">100</div>
<div class="abs" style="left:647.2px;top:134.02px;width:30.2px;height:25.1px;background:#ebf8fe;border-radius:3px"></div>
<div class="t" style="left:562.30px;width:200px;text-align:center;top:141.29px;font-size:11.5px;color:#1a7fd8;text-shadow:0.3px 0 0 currentColor;">+ 8</div>
<svg style="left:753.00px;top:139.92px" width="14" height="14" viewBox="0 0 14 14" ><circle cx="7" cy="7" r="6.2" fill="none" stroke="#b4b5c6" stroke-width="1.1"/><text x="7" y="10" font-size="8.5" text-anchor="middle" fill="#9c9db2" font-family="Liberation Sans">?</text></svg>
<div class="t" style="left:778.40px;top:140.00px;font-size:14.2px;color:#1c1c28;">unknown</div>
<div class="abs" style="left:874px;top:147px;width:4.8px;height:2px;background:#50505c"></div>
<div class="abs" style="left:880.2px;top:147px;width:4.8px;height:2px;background:#50505c"></div>
<div class="abs" style="left:984px;top:147px;width:4.8px;height:2px;background:#50505c"></div>
<div class="abs" style="left:990.2px;top:147px;width:4.8px;height:2px;background:#50505c"></div>
<div class="abs" style="left:1141.2px;top:135.72px;width:93.4px;height:21.8px;background:#f3f4fa;border:1px solid #e4e5ef;border-radius:3px"></div>
<svg style="left:1150.50px;top:140.22px" width="11" height="12" viewBox="0 0 11 12" ><path d="M5.5,0.3 L10.7,3 L10.7,5.6 L5.5,8.3 L0.3,5.6 L0.3,3Z" fill="#0b0b2d"/><path d="M5.5,1.8 L8.4,3.3 L5.5,4.8 L2.6,3.3Z" fill="#f3f4fa"/><path d="M0.6,6.6 L5.5,9.2 L10.4,6.6 M0.6,8.6 L5.5,11.2 L10.4,8.6" fill="none" stroke="#0b0b2d" stroke-width="1.2"/></svg>
<div class="t" style="left:1167.30px;top:140.49px;font-size:12.2px;color:#0b0b2d;font-weight:bold;letter-spacing:-0.15px;">ACCOUNT</div>
<svg style="left:1360.00px;top:138.22px" width="18" height="17" viewBox="0 0 18 17" ><path d="M9,0.5 L11.6,6 L17.5,6.6 L13,10.6 L14.3,16.5 L9,13.4 L3.7,16.5 L5,10.6 L0.5,6.6 L6.4,6Z" fill="#d3d4e0"/></svg>
<svg style="left:1392.00px;top:140.32px" width="3.4" height="16" viewBox="0 0 3.4 16" ><circle cx="1.7" cy="1.6" r="1.45" fill="#4f5162"/><circle cx="1.7" cy="7.9" r="1.45" fill="#4f5162"/><circle cx="1.7" cy="14.2" r="1.45" fill="#4f5162"/></svg>
<div class="abs" style="left:2px;top:179.69px;width:1432px;height:1.5px;background:#f2f2f8"></div>
<svg style="left:24.50px;top:203.44px" width="21" height="21" viewBox="0 0 21 21" ><path d="M17.80,10.50 L20.06,11.40 L19.68,13.32 L17.24,13.29 L16.57,14.56 L15.66,15.66 L16.62,17.90 L14.99,18.98 L13.29,17.24 L11.92,17.66 L10.50,17.80 L9.60,20.06 L7.68,19.68 L7.71,17.24 L6.44,16.57 L5.34,15.66 L3.10,16.62 L2.02,14.99 L3.76,13.29 L3.34,11.92 L3.20,10.50 L0.94,9.60 L1.32,7.68 L3.76,7.71 L4.43,6.44 L5.34,5.34 L4.38,3.10 L6.01,2.02 L7.71,3.76 L9.08,3.34 L10.50,3.20 L11.40,0.94 L13.32,1.32 L13.29,3.76 L14.56,4.43 L15.66,5.34 L17.90,4.38 L18.98,6.01 L17.24,7.71 L17.66,9.08Z" fill="none" stroke="#5454e6" stroke-width="1.4" stroke-linejoin="round"/><circle cx="10.5" cy="10.5" r="3.0" fill="none" stroke="#5454e6" stroke-width="1.4"/></svg>
<div class="t" style="left:62.50px;top:198.72px;font-size:14.2px;color:#0a74d0;font-weight:bold;letter-spacing:0.15px;">16-hack-week-tool</div>
<div class="t" style="left:62.50px;top:220.44px;font-size:11.7px;color:#6b6d85;">ID: R_kgDOJV7rHA</div>
<div class="abs" style="left:62.5px;top:220.33999999999997px;height:12px;white-space:nowrap;font-size:11.7px;line-height:12px;color:transparent">ID: R_kgDOJV7rHA<svg style="position:relative;left:5.5px;top:1px;display:inline-block" width="12" height="11" viewBox="0 0 12 11"><rect x="0.7" y="3.2" width="7.2" height="7.2" rx="1.2" fill="none" stroke="#4f5162" stroke-width="1.2"/><path d="M3.6,3.2 V1.9 A1.2,1.2 0 0 1 4.8,0.7 H10.1 A1.2,1.2 0 0 1 11.3,1.9 V7.1 A1.2,1.2 0 0 1 10.1,8.3 H7.9" fill="none" stroke="#4f5162" stroke-width="1.2"/></svg></div>
<div class="t" style="left:296.50px;top:193.46px;font-size:19px;color:#da1f1f;font-weight:bold;">12</div>
<div class="t" style="left:297.00px;top:218.98px;font-size:12px;color:#6b6d85;">Avg Score</div>
<div class="abs" style="left:363.5px;top:200.44px;width:1px;height:28px;background:#d9dae5"></div>
<div class="abs" style="left:383.5px;top:196.94px;width:31px;height:31px;border-radius:50%;background:#fff;box-shadow:0 0 2px 1px rgba(0,0,0,0.09)"></div>
<svg style="left:397.40px;top:190.64px" width="3.2" height="3.2" viewBox="0 0 3.2 3.2" ><circle cx="1.6" cy="1.6" r="1.45" fill="#e0201c"/></svg>
<div class="t" style="left:299.00px;width:200px;text-align:center;top:206.01px;font-size:13.5px;color:#e0201c;">0</div>
<div class="abs" style="left:437.7px;top:196.94px;width:31px;height:31px;border-radius:50%;background:#fff;box-shadow:0 0 2px 1px rgba(0,0,0,0.09)"></div>
<svg style="left:451.60px;top:190.64px" width="3.2" height="3.2" viewBox="0 0 3.2 3.2" ><circle cx="1.6" cy="1.6" r="1.45" fill="#e0201c"/></svg>
<div class="t" style="left:353.20px;width:200px;text-align:center;top:206.01px;font-size:13.5px;color:#e0201c;">0</div>
<div class="abs" style="left:546.3px;top:196.94px;width:31px;height:31px;border-radius:50%;background:#fff;box-shadow:0 0 2px 1px rgba(0,0,0,0.09)"></div>
<svg style="left:560.20px;top:190.64px" width="3.2" height="3.2" viewBox="0 0 3.2 3.2" ><circle cx="1.6" cy="1.6" r="1.45" fill="#e0201c"/></svg>
<div class="t" style="left:461.80px;width:200px;text-align:center;top:206.01px;font-size:13.5px;color:#e0201c;">0</div>
<div class="abs" style="left:600.2px;top:196.94px;width:31px;height:31px;border-radius:50%;background:#fff;box-shadow:0 0 2px 1px rgba(0,0,0,0.09)"></div>
<svg style="left:614.10px;top:190.64px" width="3.2" height="3.2" viewBox="0 0 3.2 3.2" ><circle cx="1.6" cy="1.6" r="1.45" fill="#e0201c"/></svg>
<div class="t" style="left:515.70px;width:200px;text-align:center;top:206.01px;font-size:13.5px;color:#e0201c;">0</div>
<div class="abs" style="left:492.0px;top:196.94px;width:31px;height:31px;border-radius:50%;background:#fff;box-shadow:0 0 2px 1px rgba(0,0,0,0.09)"></div>
<div class="abs" style="left:486.8px;top:191.24px;width:41.4px;height:41.4px;border-radius:50%;border:3.2px solid #16801b"></div>
<div class="t" style="left:407.50px;width:200px;text-align:center;top:205.81px;font-size:13.5px;color:#16801b;">100</div>
<div class="abs" style="left:647.2px;top:201.74px;width:30.2px;height:25.1px;background:#ebf8fe;border-radius:3px"></div>
<div class="t" style="left:562.30px;width:200px;text-align:center;top:209.01px;font-size:11.5px;color:#1a7fd8;text-shadow:0.3px 0 0 currentColor;">+ 8</div>
<svg style="left:753.00px;top:207.64px" width="14" height="14" viewBox="0 0 14 14" ><circle cx="7" cy="7" r="6.2" fill="none" stroke="#b4b5c6" stroke-width="1.1"/><text x="7" y="10" font-size="8.5" text-anchor="middle" fill="#9c9db2" font-family="Liberation Sans">?</text></svg>
<div class="t" style="left:778.40px;top:207.72px;font-size:14.2px;color:#1c1c28;">unknown</div>
<div class="abs" style="left:874px;top:214px;width:4.8px;height:2px;background:#50505c"></div>
<div class="abs" style="left:880.2px;top:214px;width:4.8px;height:2px;background:#50505c"></div>
<div class="abs" style="left:984px;top:214px;width:4.8px;height:2px;background:#50505c"></div>
<div class="abs" style="left:990.2px;top:214px;width:4.8px;height:2px;background:#50505c"></div>
<div class="abs" style="left:1141.2px;top:203.44px;width:93.4px;height:21.8px;background:#f3f4fa;border:1px solid #e4e5ef;border-radius:3px"></div>
<svg style="left:1150.50px;top:207.94px" width="11" height="12" viewBox="0 0 11 12" ><path d="M5.5,0.3 L10.7,3 L10.7,5.6 L5.5,8.3 L0.3,5.6 L0.3,3Z" fill="#0b0b2d"/><path d="M5.5,1.8 L8.4,3.3 L5.5,4.8 L2.6,3.3Z" fill="#f3f4fa"/><path d="M0.6,6.6 L5.5,9.2 L10.4,6.6 M0.6,8.6 L5.5,11.2 L10.4,8.6" fill="none" stroke="#0b0b2d" stroke-width="1.2"/></svg>
<div class="t" style="left:1167.30px;top:208.21px;font-size:12.2px;color:#0b0b2d;font-weight:bold;letter-spacing:-0.15px;">ACCOUNT</div>
<svg style="left:1360.00px;top:205.94px" width="18" height="17" viewBox="0 0 18 17" ><path d="M9,0.5 L11.6,6 L17.5,6.6 L13,10.6 L14.3,16.5 L9,13.4 L3.7,16.5 L5,10.6 L0.5,6.6 L6.4,6Z" fill="#d3d4e0"/></svg>
<svg style="left:1392.00px;top:208.04px" width="3.4" height="16" viewBox="0 0 3.4 16" ><circle cx="1.7" cy="1.6" r="1.45" fill="#4f5162"/><circle cx="1.7" cy="7.9" r="1.45" fill="#4f5162"/><circle cx="1.7" cy="14.2" r="1.45" fill="#4f5162"/></svg>
<div class="abs" style="left:2px;top:247.41px;width:1432px;height:1.5px;background:#f2f2f8"></div>
<svg style="left:24.50px;top:271.16px" width="21" height="21" viewBox="0 0 21 21" ><path d="M17.80,10.50 L20.06,11.40 L19.68,13.32 L17.24,13.29 L16.57,14.56 L15.66,15.66 L16.62,17.90 L14.99,18.98 L13.29,17.24 L11.92,17.66 L10.50,17.80 L9.60,20.06 L7.68,19.68 L7.71,17.24 L6.44,16.57 L5.34,15.66 L3.10,16.62 L2.02,14.99 L3.76,13.29 L3.34,11.92 L3.20,10.50 L0.94,9.60 L1.32,7.68 L3.76,7.71 L4.43,6.44 L5.34,5.34 L4.38,3.10 L6.01,2.02 L7.71,3.76 L9.08,3.34 L10.50,3.20 L11.40,0.94 L13.32,1.32 L13.29,3.76 L14.56,4.43 L15.66,5.34 L17.90,4.38 L18.98,6.01 L17.24,7.71 L17.66,9.08Z" fill="none" stroke="#5454e6" stroke-width="1.4" stroke-linejoin="round"/><circle cx="10.5" cy="10.5" r="3.0" fill="none" stroke="#5454e6" stroke-width="1.4"/></svg>
<div class="t" style="left:62.50px;top:266.44px;font-size:14.2px;color:#0a74d0;font-weight:bold;letter-spacing:0.15px;">20-hack-week</div>
<div class="t" style="left:62.50px;top:288.16px;font-size:11.7px;color:#6b6d85;">ID: R_kgDOJWOulQ</div>
<div class="abs" style="left:62.5px;top:288.05999999999995px;height:12px;white-space:nowrap;font-size:11.7px;line-height:12px;color:transparent">ID: R_kgDOJWOulQ<svg style="position:relative;left:5.5px;top:1px;display:inline-block" width="12" height="11" viewBox="0 0 12 11"><rect x="0.7" y="3.2" width="7.2" height="7.2" rx="1.2" fill="none" stroke="#4f5162" stroke-width="1.2"/><path d="M3.6,3.2 V1.9 A1.2,1.2 0 0 1 4.8,0.7 H10.1 A1.2,1.2 0 0 1 11.3,1.9 V7.1 A1.2,1.2 0 0 1 10.1,8.3 H7.9" fill="none" stroke="#4f5162" stroke-width="1.2"/></svg></div>
<div class="t" style="left:296.50px;top:261.18px;font-size:19px;color:#da1f1f;font-weight:bold;">12</div>
<div class="t" style="left:297.00px;top:286.70px;font-size:12px;color:#6b6d85;">Avg Score</div>
<div class="abs" style="left:363.5px;top:268.16px;width:1px;height:28px;background:#d9dae5"></div>
<div class="abs" style="left:383.5px;top:264.66px;width:31px;height:31px;border-radius:50%;background:#fff;box-shadow:0 0 2px 1px rgba(0,0,0,0.09)"></div>
<svg style="left:397.40px;top:258.36px" width="3.2" height="3.2" viewBox="0 0 3.2 3.2" ><circle cx="1.6" cy="1.6" r="1.45" fill="#e0201c"/></svg>
<div class="t" style="left:299.00px;width:200px;text-align:center;top:273.73px;font-size:13.5px;color:#e0201c;">0</div>
<div class="abs" style="left:437.7px;top:264.66px;width:31px;height:31px;border-radius:50%;background:#fff;box-shadow:0 0 2px 1px rgba(0,0,0,0.09)"></div>
<svg style="left:451.60px;top:258.36px" width="3.2" height="3.2" viewBox="0 0 3.2 3.2" ><circle cx="1.6" cy="1.6" r="1.45" fill="#e0201c"/></svg>
<div class="t" style="left:353.20px;width:200px;text-align:center;top:273.73px;font-size:13.5px;color:#e0201c;">0</div>
<div class="abs" style="left:546.3px;top:264.66px;width:31px;height:31px;border-radius:50%;background:#fff;box-shadow:0 0 2px 1px rgba(0,0,0,0.09)"></div>
<svg style="left:560.20px;top:258.36px" width="3.2" height="3.2" viewBox="0 0 3.2 3.2" ><circle cx="1.6" cy="1.6" r="1.45" fill="#e0201c"/></svg>
<div class="t" style="left:461.80px;width:200px;text-align:center;top:273.73px;font-size:13.5px;color:#e0201c;">0</div>
<div class="abs" style="left:600.2px;top:264.66px;width:31px;height:31px;border-radius:50%;background:#fff;box-shadow:0 0 2px 1px rgba(0,0,0,0.09)"></div>
<svg style="left:614.10px;top:258.36px" width="3.2" height="3.2" viewBox="0 0 3.2 3.2" ><circle cx="1.6" cy="1.6" r="1.45" fill="#e0201c"/></svg>
<div class="t" style="left:515.70px;width:200px;text-align:center;top:273.73px;font-size:13.5px;color:#e0201c;">0</div>
<div class="abs" style="left:492.0px;top:264.66px;width:31px;height:31px;border-radius:50%;background:#fff;box-shadow:0 0 2px 1px rgba(0,0,0,0.09)"></div>
<div class="abs" style="left:486.8px;top:258.96px;width:41.4px;height:41.4px;border-radius:50%;border:3.2px solid #16801b"></div>
<div class="t" style="left:407.50px;width:200px;text-align:center;top:273.53px;font-size:13.5px;color:#16801b;">100</div>
<div class="abs" style="left:647.2px;top:269.46px;width:30.2px;height:25.1px;background:#ebf8fe;border-radius:3px"></div>
<div class="t" style="left:562.30px;width:200px;text-align:center;top:276.73px;font-size:11.5px;color:#1a7fd8;text-shadow:0.3px 0 0 currentColor;">+ 8</div>
<svg style="left:753.00px;top:275.36px" width="14" height="14" viewBox="0 0 14 14" ><circle cx="7" cy="7" r="6.2" fill="none" stroke="#b4b5c6" stroke-width="1.1"/><text x="7" y="10" font-size="8.5" text-anchor="middle" fill="#9c9db2" font-family="Liberation Sans">?</text></svg>
<div class="t" style="left:778.40px;top:275.44px;font-size:14.2px;color:#1c1c28;">unknown</div>
<div class="abs" style="left:874px;top:282px;width:4.8px;height:2px;background:#50505c"></div>
<div class="abs" style="left:880.2px;top:282px;width:4.8px;height:2px;background:#50505c"></div>
<div class="abs" style="left:984px;top:282px;width:4.8px;height:2px;background:#50505c"></div>
<div class="abs" style="left:990.2px;top:282px;width:4.8px;height:2px;background:#50505c"></div>
<div class="abs" style="left:1141.2px;top:271.16px;width:93.4px;height:21.8px;background:#f3f4fa;border:1px solid #e4e5ef;border-radius:3px"></div>
<svg style="left:1150.50px;top:275.66px" width="11" height="12" viewBox="0 0 11 12" ><path d="M5.5,0.3 L10.7,3 L10.7,5.6 L5.5,8.3 L0.3,5.6 L0.3,3Z" fill="#0b0b2d"/><path d="M5.5,1.8 L8.4,3.3 L5.5,4.8 L2.6,3.3Z" fill="#f3f4fa"/><path d="M0.6,6.6 L5.5,9.2 L10.4,6.6 M0.6,8.6 L5.5,11.2 L10.4,8.6" fill="none" stroke="#0b0b2d" stroke-width="1.2"/></svg>
<div class="t" style="left:1167.30px;top:275.93px;font-size:12.2px;color:#0b0b2d;font-weight:bold;letter-spacing:-0.15px;">ACCOUNT</div>
<svg style="left:1360.00px;top:273.66px" width="18" height="17" viewBox="0 0 18 17" ><path d="M9,0.5 L11.6,6 L17.5,6.6 L13,10.6 L14.3,16.5 L9,13.4 L3.7,16.5 L5,10.6 L0.5,6.6 L6.4,6Z" fill="#d3d4e0"/></svg>
<svg style="left:1392.00px;top:275.76px" width="3.4" height="16" viewBox="0 0 3.4 16" ><circle cx="1.7" cy="1.6" r="1.45" fill="#4f5162"/><circle cx="1.7" cy="7.9" r="1.45" fill="#4f5162"/><circle cx="1.7" cy="14.2" r="1.45" fill="#4f5162"/></svg>
<div class="abs" style="left:2px;top:315.13px;width:1432px;height:1.5px;background:#f2f2f8"></div>
<svg style="left:24.50px;top:338.88px" width="21" height="21" viewBox="0 0 21 21" ><path d="M17.80,10.50 L20.06,11.40 L19.68,13.32 L17.24,13.29 L16.57,14.56 L15.66,15.66 L16.62,17.90 L14.99,18.98 L13.29,17.24 L11.92,17.66 L10.50,17.80 L9.60,20.06 L7.68,19.68 L7.71,17.24 L6.44,16.57 L5.34,15.66 L3.10,16.62 L2.02,14.99 L3.76,13.29 L3.34,11.92 L3.20,10.50 L0.94,9.60 L1.32,7.68 L3.76,7.71 L4.43,6.44 L5.34,5.34 L4.38,3.10 L6.01,2.02 L7.71,3.76 L9.08,3.34 L10.50,3.20 L11.40,0.94 L13.32,1.32 L13.29,3.76 L14.56,4.43 L15.66,5.34 L17.90,4.38 L18.98,6.01 L17.24,7.71 L17.66,9.08Z" fill="none" stroke="#5454e6" stroke-width="1.4" stroke-linejoin="round"/><circle cx="10.5" cy="10.5" r="3.0" fill="none" stroke="#5454e6" stroke-width="1.4"/></svg>
<div class="t" style="left:62.50px;top:334.16px;font-size:14.2px;color:#0a74d0;font-weight:bold;letter-spacing:0.15px;">47-hack-ui</div>
<div class="t" style="left:62.50px;top:355.88px;font-size:11.7px;color:#6b6d85;">ID: R_kgDOJVuBmg</div>
<div class="abs" style="left:62.5px;top:355.78px;height:12px;white-space:nowrap;font-size:11.7px;line-height:12px;color:transparent">ID: R_kgDOJVuBmg<svg style="position:relative;left:5.5px;top:1px;display:inline-block" width="12" height="11" viewBox="0 0 12 11"><rect x="0.7" y="3.2" width="7.2" height="7.2" rx="1.2" fill="none" stroke="#4f5162" stroke-width="1.2"/><path d="M3.6,3.2 V1.9 A1.2,1.2 0 0 1 4.8,0.7 H10.1 A1.2,1.2 0 0 1 11.3,1.9 V7.1 A1.2,1.2 0 0 1 10.1,8.3 H7.9" fill="none" stroke="#4f5162" stroke-width="1.2"/></svg></div>
<div class="t" style="left:296.50px;top:328.90px;font-size:19px;color:#da1f1f;font-weight:bold;">12</div>
<div class="t" style="left:297.00px;top:354.42px;font-size:12px;color:#6b6d85;">Avg Score</div>
<div class="abs" style="left:363.5px;top:335.88px;width:1px;height:28px;background:#d9dae5"></div>
<div class="abs" style="left:383.5px;top:332.38px;width:31px;height:31px;border-radius:50%;background:#fff;box-shadow:0 0 2px 1px rgba(0,0,0,0.09)"></div>
<svg style="left:397.40px;top:326.08px" width="3.2" height="3.2" viewBox="0 0 3.2 3.2" ><circle cx="1.6" cy="1.6" r="1.45" fill="#e0201c"/></svg>
<div class="t" style="left:299.00px;width:200px;text-align:center;top:341.45px;font-size:13.5px;color:#e0201c;">0</div>
<div class="abs" style="left:437.7px;top:332.38px;width:31px;height:31px;border-radius:50%;background:#fff;box-shadow:0 0 2px 1px rgba(0,0,0,0.09)"></div>
<svg style="left:451.60px;top:326.08px" width="3.2" height="3.2" viewBox="0 0 3.2 3.2" ><circle cx="1.6" cy="1.6" r="1.45" fill="#e0201c"/></svg>
<div class="t" style="left:353.20px;width:200px;text-align:center;top:341.45px;font-size:13.5px;color:#e0201c;">0</div>
<div class="abs" style="left:546.3px;top:332.38px;width:31px;height:31px;border-radius:50%;background:#fff;box-shadow:0 0 2px 1px rgba(0,0,0,0.09)"></div>
<svg style="left:560.20px;top:326.08px" width="3.2" height="3.2" viewBox="0 0 3.2 3.2" ><circle cx="1.6" cy="1.6" r="1.45" fill="#e0201c"/></svg>
<div class="t" style="left:461.80px;width:200px;text-align:center;top:341.45px;font-size:13.5px;color:#e0201c;">0</div>
<div class="abs" style="left:600.2px;top:332.38px;width:31px;height:31px;border-radius:50%;background:#fff;box-shadow:0 0 2px 1px rgba(0,0,0,0.09)"></div>
<svg style="left:614.10px;top:326.08px" width="3.2" height="3.2" viewBox="0 0 3.2 3.2" ><circle cx="1.6" cy="1.6" r="1.45" fill="#e0201c"/></svg>
<div class="t" style="left:515.70px;width:200px;text-align:center;top:341.45px;font-size:13.5px;color:#e0201c;">0</div>
<div class="abs" style="left:492.0px;top:332.38px;width:31px;height:31px;border-radius:50%;background:#fff;box-shadow:0 0 2px 1px rgba(0,0,0,0.09)"></div>
<div class="abs" style="left:486.8px;top:326.68px;width:41.4px;height:41.4px;border-radius:50%;border:3.2px solid #16801b"></div>
<div class="t" style="left:407.50px;width:200px;text-align:center;top:341.25px;font-size:13.5px;color:#16801b;">100</div>
<div class="abs" style="left:647.2px;top:337.18px;width:30.2px;height:25.1px;background:#ebf8fe;border-radius:3px"></div>
<div class="t" style="left:562.30px;width:200px;text-align:center;top:344.45px;font-size:11.5px;color:#1a7fd8;text-shadow:0.3px 0 0 currentColor;">+ 8</div>
<svg style="left:753.00px;top:343.08px" width="14" height="14" viewBox="0 0 14 14" ><circle cx="7" cy="7" r="6.2" fill="none" stroke="#b4b5c6" stroke-width="1.1"/><text x="7" y="10" font-size="8.5" text-anchor="middle" fill="#9c9db2" font-family="Liberation Sans">?</text></svg>
<div class="t" style="left:778.40px;top:343.16px;font-size:14.2px;color:#1c1c28;">unknown</div>
<div class="abs" style="left:874px;top:350px;width:4.8px;height:2px;background:#50505c"></div>
<div class="abs" style="left:880.2px;top:350px;width:4.8px;height:2px;background:#50505c"></div>
<div class="abs" style="left:984px;top:350px;width:4.8px;height:2px;background:#50505c"></div>
<div class="abs" style="left:990.2px;top:350px;width:4.8px;height:2px;background:#50505c"></div>
<div class="abs" style="left:1141.2px;top:338.88px;width:93.4px;height:21.8px;background:#f3f4fa;border:1px solid #e4e5ef;border-radius:3px"></div>
<svg style="left:1150.50px;top:343.38px" width="11" height="12" viewBox="0 0 11 12" ><path d="M5.5,0.3 L10.7,3 L10.7,5.6 L5.5,8.3 L0.3,5.6 L0.3,3Z" fill="#0b0b2d"/><path d="M5.5,1.8 L8.4,3.3 L5.5,4.8 L2.6,3.3Z" fill="#f3f4fa"/><path d="M0.6,6.6 L5.5,9.2 L10.4,6.6 M0.6,8.6 L5.5,11.2 L10.4,8.6" fill="none" stroke="#0b0b2d" stroke-width="1.2"/></svg>
<div class="t" style="left:1167.30px;top:343.65px;font-size:12.2px;color:#0b0b2d;font-weight:bold;letter-spacing:-0.15px;">ACCOUNT</div>
<svg style="left:1360.00px;top:341.38px" width="18" height="17" viewBox="0 0 18 17" ><path d="M9,0.5 L11.6,6 L17.5,6.6 L13,10.6 L14.3,16.5 L9,13.4 L3.7,16.5 L5,10.6 L0.5,6.6 L6.4,6Z" fill="#d3d4e0"/></svg>
<svg style="left:1392.00px;top:343.48px" width="3.4" height="16" viewBox="0 0 3.4 16" ><circle cx="1.7" cy="1.6" r="1.45" fill="#4f5162"/><circle cx="1.7" cy="7.9" r="1.45" fill="#4f5162"/><circle cx="1.7" cy="14.2" r="1.45" fill="#4f5162"/></svg>
<div class="abs" style="left:2px;top:382.85px;width:1432px;height:1.5px;background:#f2f2f8"></div>
<svg style="left:24.50px;top:406.60px" width="21" height="21" viewBox="0 0 21 21" ><path d="M17.80,10.50 L20.06,11.40 L19.68,13.32 L17.24,13.29 L16.57,14.56 L15.66,15.66 L16.62,17.90 L14.99,18.98 L13.29,17.24 L11.92,17.66 L10.50,17.80 L9.60,20.06 L7.68,19.68 L7.71,17.24 L6.44,16.57 L5.34,15.66 L3.10,16.62 L2.02,14.99 L3.76,13.29 L3.34,11.92 L3.20,10.50 L0.94,9.60 L1.32,7.68 L3.76,7.71 L4.43,6.44 L5.34,5.34 L4.38,3.10 L6.01,2.02 L7.71,3.76 L9.08,3.34 L10.50,3.20 L11.40,0.94 L13.32,1.32 L13.29,3.76 L14.56,4.43 L15.66,5.34 L17.90,4.38 L18.98,6.01 L17.24,7.71 L17.66,9.08Z" fill="none" stroke="#5454e6" stroke-width="1.4" stroke-linejoin="round"/><circle cx="10.5" cy="10.5" r="3.0" fill="none" stroke="#5454e6" stroke-width="1.4"/></svg>
<div class="t" style="left:62.50px;top:401.88px;font-size:14.2px;color:#0a74d0;font-weight:bold;letter-spacing:0.15px;">aaGit</div>
<div class="t" style="left:62.50px;top:423.60px;font-size:11.7px;color:#6b6d85;">ID: R_kgDOHR9xZw</div>
<div class="abs" style="left:62.5px;top:423.5px;height:12px;white-space:nowrap;font-size:11.7px;line-height:12px;color:transparent">ID: R_kgDOHR9xZw<svg style="position:relative;left:5.5px;top:1px;display:inline-block" width="12" height="11" viewBox="0 0 12 11"><rect x="0.7" y="3.2" width="7.2" height="7.2" rx="1.2" fill="none" stroke="#4f5162" stroke-width="1.2"/><path d="M3.6,3.2 V1.9 A1.2,1.2 0 0 1 4.8,0.7 H10.1 A1.2,1.2 0 0 1 11.3,1.9 V7.1 A1.2,1.2 0 0 1 10.1,8.3 H7.9" fill="none" stroke="#4f5162" stroke-width="1.2"/></svg></div>
<div class="t" style="left:296.50px;top:396.62px;font-size:19px;color:#da1f1f;font-weight:bold;">12</div>
<div class="t" style="left:297.00px;top:422.14px;font-size:12px;color:#6b6d85;">Avg Score</div>
<div class="abs" style="left:363.5px;top:403.6px;width:1px;height:28px;background:#d9dae5"></div>
<div class="abs" style="left:383.5px;top:400.1px;width:31px;height:31px;border-radius:50%;background:#fff;box-shadow:0 0 2px 1px rgba(0,0,0,0.09)"></div>
<svg style="left:397.40px;top:393.80px" width="3.2" height="3.2" viewBox="0 0 3.2 3.2" ><circle cx="1.6" cy="1.6" r="1.45" fill="#e0201c"/></svg>
<div class="t" style="left:299.00px;width:200px;text-align:center;top:409.17px;font-size:13.5px;color:#e0201c;">0</div>
<div class="abs" style="left:437.7px;top:400.1px;width:31px;height:31px;border-radius:50%;background:#fff;box-shadow:0 0 2px 1px rgba(0,0,0,0.09)"></div>
<svg style="left:451.60px;top:393.80px" width="3.2" height="3.2" viewBox="0 0 3.2 3.2" ><circle cx="1.6" cy="1.6" r="1.45" fill="#e0201c"/></svg>
<div class="t" style="left:353.20px;width:200px;text-align:center;top:409.17px;font-size:13.5px;color:#e0201c;">0</div>
<div class="abs" style="left:546.3px;top:400.1px;width:31px;height:31px;border-radius:50%;background:#fff;box-shadow:0 0 2px 1px rgba(0,0,0,0.09)"></div>
<svg style="left:560.20px;top:393.80px" width="3.2" height="3.2" viewBox="0 0 3.2 3.2" ><circle cx="1.6" cy="1.6" r="1.45" fill="#e0201c"/></svg>
<div class="t" style="left:461.80px;width:200px;text-align:center;top:409.17px;font-size:13.5px;color:#e0201c;">0</div>
<div class="abs" style="left:600.2px;top:400.1px;width:31px;height:31px;border-radius:50%;background:#fff;box-shadow:0 0 2px 1px rgba(0,0,0,0.09)"></div>
<svg style="left:614.10px;top:393.80px" width="3.2" height="3.2" viewBox="0 0 3.2 3.2" ><circle cx="1.6" cy="1.6" r="1.45" fill="#e0201c"/></svg>
<div class="t" style="left:515.70px;width:200px;text-align:center;top:409.17px;font-size:13.5px;color:#e0201c;">0</div>
<div class="abs" style="left:492.0px;top:400.1px;width:31px;height:31px;border-radius:50%;background:#fff;box-shadow:0 0 2px 1px rgba(0,0,0,0.09)"></div>
<div class="abs" style="left:486.8px;top:394.4px;width:41.4px;height:41.4px;border-radius:50%;border:3.2px solid #16801b"></div>
<div class="t" style="left:407.50px;width:200px;text-align:center;top:408.97px;font-size:13.5px;color:#16801b;">100</div>
<div class="abs" style="left:647.2px;top:404.9px;width:30.2px;height:25.1px;background:#ebf8fe;border-radius:3px"></div>
<div class="t" style="left:562.30px;width:200px;text-align:center;top:412.17px;font-size:11.5px;color:#1a7fd8;text-shadow:0.3px 0 0 currentColor;">+ 8</div>
<svg style="left:753.00px;top:410.80px" width="14" height="14" viewBox="0 0 14 14" ><circle cx="7" cy="7" r="6.2" fill="none" stroke="#b4b5c6" stroke-width="1.1"/><text x="7" y="10" font-size="8.5" text-anchor="middle" fill="#9c9db2" font-family="Liberation Sans">?</text></svg>
<div class="t" style="left:778.40px;top:410.88px;font-size:14.2px;color:#1c1c28;">unknown</div>
<div class="abs" style="left:874px;top:417px;width:4.8px;height:2px;background:#50505c"></div>
<div class="abs" style="left:880.2px;top:417px;width:4.8px;height:2px;background:#50505c"></div>
<div class="abs" style="left:984px;top:417px;width:4.8px;height:2px;background:#50505c"></div>
<div class="abs" style="left:990.2px;top:417px;width:4.8px;height:2px;background:#50505c"></div>
<div class="abs" style="left:1141.2px;top:406.6px;width:93.4px;height:21.8px;background:#f3f4fa;border:1px solid #e4e5ef;border-radius:3px"></div>
<svg style="left:1150.50px;top:411.10px" width="11" height="12" viewBox="0 0 11 12" ><path d="M5.5,0.3 L10.7,3 L10.7,5.6 L5.5,8.3 L0.3,5.6 L0.3,3Z" fill="#0b0b2d"/><path d="M5.5,1.8 L8.4,3.3 L5.5,4.8 L2.6,3.3Z" fill="#f3f4fa"/><path d="M0.6,6.6 L5.5,9.2 L10.4,6.6 M0.6,8.6 L5.5,11.2 L10.4,8.6" fill="none" stroke="#0b0b2d" stroke-width="1.2"/></svg>
<div class="t" style="left:1167.30px;top:411.37px;font-size:12.2px;color:#0b0b2d;font-weight:bold;letter-spacing:-0.15px;">ACCOUNT</div>
<svg style="left:1360.00px;top:409.10px" width="18" height="17" viewBox="0 0 18 17" ><path d="M9,0.5 L11.6,6 L17.5,6.6 L13,10.6 L14.3,16.5 L9,13.4 L3.7,16.5 L5,10.6 L0.5,6.6 L6.4,6Z" fill="#d3d4e0"/></svg>
<svg style="left:1392.00px;top:411.20px" width="3.4" height="16" viewBox="0 0 3.4 16" ><circle cx="1.7" cy="1.6" r="1.45" fill="#4f5162"/><circle cx="1.7" cy="7.9" r="1.45" fill="#4f5162"/><circle cx="1.7" cy="14.2" r="1.45" fill="#4f5162"/></svg>
<div class="abs" style="left:2px;top:450.57px;width:1432px;height:1.5px;background:#f2f2f8"></div>
<svg style="left:24.50px;top:474.32px" width="21" height="21" viewBox="0 0 21 21" ><path d="M17.80,10.50 L20.06,11.40 L19.68,13.32 L17.24,13.29 L16.57,14.56 L15.66,15.66 L16.62,17.90 L14.99,18.98 L13.29,17.24 L11.92,17.66 L10.50,17.80 L9.60,20.06 L7.68,19.68 L7.71,17.24 L6.44,16.57 L5.34,15.66 L3.10,16.62 L2.02,14.99 L3.76,13.29 L3.34,11.92 L3.20,10.50 L0.94,9.60 L1.32,7.68 L3.76,7.71 L4.43,6.44 L5.34,5.34 L4.38,3.10 L6.01,2.02 L7.71,3.76 L9.08,3.34 L10.50,3.20 L11.40,0.94 L13.32,1.32 L13.29,3.76 L14.56,4.43 L15.66,5.34 L17.90,4.38 L18.98,6.01 L17.24,7.71 L17.66,9.08Z" fill="none" stroke="#5454e6" stroke-width="1.4" stroke-linejoin="round"/><circle cx="10.5" cy="10.5" r="3.0" fill="none" stroke="#5454e6" stroke-width="1.4"/></svg>
<div class="t" style="left:62.50px;top:469.60px;font-size:14.2px;color:#0a74d0;font-weight:bold;letter-spacing:0.15px;">account-migration</div>
<div class="t" style="left:62.50px;top:491.32px;font-size:11.7px;color:#6b6d85;">ID: R_kgDOK568ew</div>
<div class="abs" style="left:62.5px;top:491.2199999999999px;height:12px;white-space:nowrap;font-size:11.7px;line-height:12px;color:transparent">ID: R_kgDOK568ew<svg style="position:relative;left:5.5px;top:1px;display:inline-block" width="12" height="11" viewBox="0 0 12 11"><rect x="0.7" y="3.2" width="7.2" height="7.2" rx="1.2" fill="none" stroke="#4f5162" stroke-width="1.2"/><path d="M3.6,3.2 V1.9 A1.2,1.2 0 0 1 4.8,0.7 H10.1 A1.2,1.2 0 0 1 11.3,1.9 V7.1 A1.2,1.2 0 0 1 10.1,8.3 H7.9" fill="none" stroke="#4f5162" stroke-width="1.2"/></svg></div>
<div class="t" style="left:296.50px;top:464.34px;font-size:19px;color:#da1f1f;font-weight:bold;">12</div>
<div class="t" style="left:297.00px;top:489.86px;font-size:12px;color:#6b6d85;">Avg Score</div>
<div class="abs" style="left:363.5px;top:471.32px;width:1px;height:28px;background:#d9dae5"></div>
<div class="abs" style="left:383.5px;top:467.82px;width:31px;height:31px;border-radius:50%;background:#fff;box-shadow:0 0 2px 1px rgba(0,0,0,0.09)"></div>
<svg style="left:397.40px;top:461.52px" width="3.2" height="3.2" viewBox="0 0 3.2 3.2" ><circle cx="1.6" cy="1.6" r="1.45" fill="#e0201c"/></svg>
<div class="t" style="left:299.00px;width:200px;text-align:center;top:476.89px;font-size:13.5px;color:#e0201c;">0</div>
<div class="abs" style="left:437.7px;top:467.82px;width:31px;height:31px;border-radius:50%;background:#fff;box-shadow:0 0 2px 1px rgba(0,0,0,0.09)"></div>
<svg style="left:451.60px;top:461.52px" width="3.2" height="3.2" viewBox="0 0 3.2 3.2" ><circle cx="1.6" cy="1.6" r="1.45" fill="#e0201c"/></svg>
<div class="t" style="left:353.20px;width:200px;text-align:center;top:476.89px;font-size:13.5px;color:#e0201c;">0</div>
<div class="abs" style="left:546.3px;top:467.82px;width:31px;height:31px;border-radius:50%;background:#fff;box-shadow:0 0 2px 1px rgba(0,0,0,0.09)"></div>
<svg style="left:560.20px;top:461.52px" width="3.2" height="3.2" viewBox="0 0 3.2 3.2" ><circle cx="1.6" cy="1.6" r="1.45" fill="#e0201c"/></svg>
<div class="t" style="left:461.80px;width:200px;text-align:center;top:476.89px;font-size:13.5px;color:#e0201c;">0</div>
<div class="abs" style="left:600.2px;top:467.82px;width:31px;height:31px;border-radius:50%;background:#fff;box-shadow:0 0 2px 1px rgba(0,0,0,0.09)"></div>
<svg style="left:614.10px;top:461.52px" width="3.2" height="3.2" viewBox="0 0 3.2 3.2" ><circle cx="1.6" cy="1.6" r="1.45" fill="#e0201c"/></svg>
<div class="t" style="left:515.70px;width:200px;text-align:center;top:476.89px;font-size:13.5px;color:#e0201c;">0</div>
<div class="abs" style="left:492.0px;top:467.82px;width:31px;height:31px;border-radius:50%;background:#fff;box-shadow:0 0 2px 1px rgba(0,0,0,0.09)"></div>
<div class="abs" style="left:486.8px;top:462.12px;width:41.4px;height:41.4px;border-radius:50%;border:3.2px solid #16801b"></div>
<div class="t" style="left:407.50px;width:200px;text-align:center;top:476.69px;font-size:13.5px;color:#16801b;">100</div>
<div class="abs" style="left:647.2px;top:472.62px;width:30.2px;height:25.1px;background:#ebf8fe;border-radius:3px"></div>
<div class="t" style="left:562.30px;width:200px;text-align:center;top:479.89px;font-size:11.5px;color:#1a7fd8;text-shadow:0.3px 0 0 currentColor;">+ 8</div>
<svg style="left:753.00px;top:478.52px" width="14" height="14" viewBox="0 0 14 14" ><circle cx="7" cy="7" r="6.2" fill="none" stroke="#b4b5c6" stroke-width="1.1"/><text x="7" y="10" font-size="8.5" text-anchor="middle" fill="#9c9db2" font-family="Liberation Sans">?</text></svg>
<div class="t" style="left:778.40px;top:478.60px;font-size:14.2px;color:#1c1c28;">unknown</div>
<div class="abs" style="left:874px;top:485px;width:4.8px;height:2px;background:#50505c"></div>
<div class="abs" style="left:880.2px;top:485px;width:4.8px;height:2px;background:#50505c"></div>
<div class="abs" style="left:984px;top:485px;width:4.8px;height:2px;background:#50505c"></div>
<div class="abs" style="left:990.2px;top:485px;width:4.8px;height:2px;background:#50505c"></div>
<div class="abs" style="left:1141.2px;top:474.32px;width:93.4px;height:21.8px;background:#f3f4fa;border:1px solid #e4e5ef;border-radius:3px"></div>
<svg style="left:1150.50px;top:478.82px" width="11" height="12" viewBox="0 0 11 12" ><path d="M5.5,0.3 L10.7,3 L10.7,5.6 L5.5,8.3 L0.3,5.6 L0.3,3Z" fill="#0b0b2d"/><path d="M5.5,1.8 L8.4,3.3 L5.5,4.8 L2.6,3.3Z" fill="#f3f4fa"/><path d="M0.6,6.6 L5.5,9.2 L10.4,6.6 M0.6,8.6 L5.5,11.2 L10.4,8.6" fill="none" stroke="#0b0b2d" stroke-width="1.2"/></svg>
<div class="t" style="left:1167.30px;top:479.09px;font-size:12.2px;color:#0b0b2d;font-weight:bold;letter-spacing:-0.15px;">ACCOUNT</div>
<svg style="left:1360.00px;top:476.82px" width="18" height="17" viewBox="0 0 18 17" ><path d="M9,0.5 L11.6,6 L17.5,6.6 L13,10.6 L14.3,16.5 L9,13.4 L3.7,16.5 L5,10.6 L0.5,6.6 L6.4,6Z" fill="#d3d4e0"/></svg>
<svg style="left:1392.00px;top:478.92px" width="3.4" height="16" viewBox="0 0 3.4 16" ><circle cx="1.7" cy="1.6" r="1.45" fill="#4f5162"/><circle cx="1.7" cy="7.9" r="1.45" fill="#4f5162"/><circle cx="1.7" cy="14.2" r="1.45" fill="#4f5162"/></svg>
<div class="abs" style="left:2px;top:518.29px;width:1432px;height:1.5px;background:#f2f2f8"></div>
<svg style="left:24.50px;top:542.04px" width="21" height="21" viewBox="0 0 21 21" ><path d="M17.80,10.50 L20.06,11.40 L19.68,13.32 L17.24,13.29 L16.57,14.56 L15.66,15.66 L16.62,17.90 L14.99,18.98 L13.29,17.24 L11.92,17.66 L10.50,17.80 L9.60,20.06 L7.68,19.68 L7.71,17.24 L6.44,16.57 L5.34,15.66 L3.10,16.62 L2.02,14.99 L3.76,13.29 L3.34,11.92 L3.20,10.50 L0.94,9.60 L1.32,7.68 L3.76,7.71 L4.43,6.44 L5.34,5.34 L4.38,3.10 L6.01,2.02 L7.71,3.76 L9.08,3.34 L10.50,3.20 L11.40,0.94 L13.32,1.32 L13.29,3.76 L14.56,4.43 L15.66,5.34 L17.90,4.38 L18.98,6.01 L17.24,7.71 L17.66,9.08Z" fill="none" stroke="#5454e6" stroke-width="1.4" stroke-linejoin="round"/><circle cx="10.5" cy="10.5" r="3.0" fill="none" stroke="#5454e6" stroke-width="1.4"/></svg>
<div class="t" style="left:62.50px;top:537.32px;font-size:14.2px;color:#0a74d0;font-weight:bold;letter-spacing:0.15px;">acr-artifact-plugin</div>
<div class="t" style="left:62.50px;top:559.04px;font-size:11.7px;color:#6b6d85;">ID: R_kgDOMyRxMQ</div>
<div class="abs" style="left:62.5px;top:558.9399999999999px;height:12px;white-space:nowrap;font-size:11.7px;line-height:12px;color:transparent">ID: R_kgDOMyRxMQ<svg style="position:relative;left:5.5px;top:1px;display:inline-block" width="12" height="11" viewBox="0 0 12 11"><rect x="0.7" y="3.2" width="7.2" height="7.2" rx="1.2" fill="none" stroke="#4f5162" stroke-width="1.2"/><path d="M3.6,3.2 V1.9 A1.2,1.2 0 0 1 4.8,0.7 H10.1 A1.2,1.2 0 0 1 11.3,1.9 V7.1 A1.2,1.2 0 0 1 10.1,8.3 H7.9" fill="none" stroke="#4f5162" stroke-width="1.2"/></svg></div>
<div class="t" style="left:296.50px;top:532.06px;font-size:19px;color:#da1f1f;font-weight:bold;">12</div>
<div class="t" style="left:297.00px;top:557.58px;font-size:12px;color:#6b6d85;">Avg Score</div>
<div class="abs" style="left:363.5px;top:539.04px;width:1px;height:28px;background:#d9dae5"></div>
<div class="abs" style="left:383.5px;top:535.54px;width:31px;height:31px;border-radius:50%;background:#fff;box-shadow:0 0 2px 1px rgba(0,0,0,0.09)"></div>
<svg style="left:397.40px;top:529.24px" width="3.2" height="3.2" viewBox="0 0 3.2 3.2" ><circle cx="1.6" cy="1.6" r="1.45" fill="#e0201c"/></svg>
<div class="t" style="left:299.00px;width:200px;text-align:center;top:544.61px;font-size:13.5px;color:#e0201c;">0</div>
<div class="abs" style="left:437.7px;top:535.54px;width:31px;height:31px;border-radius:50%;background:#fff;box-shadow:0 0 2px 1px rgba(0,0,0,0.09)"></div>
<svg style="left:451.60px;top:529.24px" width="3.2" height="3.2" viewBox="0 0 3.2 3.2" ><circle cx="1.6" cy="1.6" r="1.45" fill="#e0201c"/></svg>
<div class="t" style="left:353.20px;width:200px;text-align:center;top:544.61px;font-size:13.5px;color:#e0201c;">0</div>
<div class="abs" style="left:546.3px;top:535.54px;width:31px;height:31px;border-radius:50%;background:#fff;box-shadow:0 0 2px 1px rgba(0,0,0,0.09)"></div>
<svg style="left:560.20px;top:529.24px" width="3.2" height="3.2" viewBox="0 0 3.2 3.2" ><circle cx="1.6" cy="1.6" r="1.45" fill="#e0201c"/></svg>
<div class="t" style="left:461.80px;width:200px;text-align:center;top:544.61px;font-size:13.5px;color:#e0201c;">0</div>
<div class="abs" style="left:600.2px;top:535.54px;width:31px;height:31px;border-radius:50%;background:#fff;box-shadow:0 0 2px 1px rgba(0,0,0,0.09)"></div>
<svg style="left:614.10px;top:529.24px" width="3.2" height="3.2" viewBox="0 0 3.2 3.2" ><circle cx="1.6" cy="1.6" r="1.45" fill="#e0201c"/></svg>
<div class="t" style="left:515.70px;width:200px;text-align:center;top:544.61px;font-size:13.5px;color:#e0201c;">0</div>
<div class="abs" style="left:492.0px;top:535.54px;width:31px;height:31px;border-radius:50%;background:#fff;box-shadow:0 0 2px 1px rgba(0,0,0,0.09)"></div>
<div class="abs" style="left:486.8px;top:529.84px;width:41.4px;height:41.4px;border-radius:50%;border:3.2px solid #16801b"></div>
<div class="t" style="left:407.50px;width:200px;text-align:center;top:544.41px;font-size:13.5px;color:#16801b;">100</div>
<div class="abs" style="left:647.2px;top:540.34px;width:30.2px;height:25.1px;background:#ebf8fe;border-radius:3px"></div>
<div class="t" style="left:562.30px;width:200px;text-align:center;top:547.61px;font-size:11.5px;color:#1a7fd8;text-shadow:0.3px 0 0 currentColor;">+ 8</div>
<svg style="left:753.00px;top:546.24px" width="14" height="14" viewBox="0 0 14 14" ><circle cx="7" cy="7" r="6.2" fill="none" stroke="#b4b5c6" stroke-width="1.1"/><text x="7" y="10" font-size="8.5" text-anchor="middle" fill="#9c9db2" font-family="Liberation Sans">?</text></svg>
<div class="t" style="left:778.40px;top:546.32px;font-size:14.2px;color:#1c1c28;">unknown</div>
<div class="abs" style="left:874px;top:553px;width:4.8px;height:2px;background:#50505c"></div>
<div class="abs" style="left:880.2px;top:553px;width:4.8px;height:2px;background:#50505c"></div>
<div class="abs" style="left:984px;top:553px;width:4.8px;height:2px;background:#50505c"></div>
<div class="abs" style="left:990.2px;top:553px;width:4.8px;height:2px;background:#50505c"></div>
<div class="abs" style="left:1141.2px;top:542.04px;width:93.4px;height:21.8px;background:#f3f4fa;border:1px solid #e4e5ef;border-radius:3px"></div>
<svg style="left:1150.50px;top:546.54px" width="11" height="12" viewBox="0 0 11 12" ><path d="M5.5,0.3 L10.7,3 L10.7,5.6 L5.5,8.3 L0.3,5.6 L0.3,3Z" fill="#0b0b2d"/><path d="M5.5,1.8 L8.4,3.3 L5.5,4.8 L2.6,3.3Z" fill="#f3f4fa"/><path d="M0.6,6.6 L5.5,9.2 L10.4,6.6 M0.6,8.6 L5.5,11.2 L10.4,8.6" fill="none" stroke="#0b0b2d" stroke-width="1.2"/></svg>
<div class="t" style="left:1167.30px;top:546.81px;font-size:12.2px;color:#0b0b2d;font-weight:bold;letter-spacing:-0.15px;">ACCOUNT</div>
<svg style="left:1360.00px;top:544.54px" width="18" height="17" viewBox="0 0 18 17" ><path d="M9,0.5 L11.6,6 L17.5,6.6 L13,10.6 L14.3,16.5 L9,13.4 L3.7,16.5 L5,10.6 L0.5,6.6 L6.4,6Z" fill="#d3d4e0"/></svg>
<svg style="left:1392.00px;top:546.64px" width="3.4" height="16" viewBox="0 0 3.4 16" ><circle cx="1.7" cy="1.6" r="1.45" fill="#4f5162"/><circle cx="1.7" cy="7.9" r="1.45" fill="#4f5162"/><circle cx="1.7" cy="14.2" r="1.45" fill="#4f5162"/></svg>
<div class="abs" style="left:2px;top:586.01px;width:1432px;height:1.5px;background:#f2f2f8"></div>
<svg style="left:24.50px;top:609.76px" width="21" height="21" viewBox="0 0 21 21" ><path d="M17.80,10.50 L20.06,11.40 L19.68,13.32 L17.24,13.29 L16.57,14.56 L15.66,15.66 L16.62,17.90 L14.99,18.98 L13.29,17.24 L11.92,17.66 L10.50,17.80 L9.60,20.06 L7.68,19.68 L7.71,17.24 L6.44,16.57 L5.34,15.66 L3.10,16.62 L2.02,14.99 L3.76,13.29 L3.34,11.92 L3.20,10.50 L0.94,9.60 L1.32,7.68 L3.76,7.71 L4.43,6.44 L5.34,5.34 L4.38,3.10 L6.01,2.02 L7.71,3.76 L9.08,3.34 L10.50,3.20 L11.40,0.94 L13.32,1.32 L13.29,3.76 L14.56,4.43 L15.66,5.34 L17.90,4.38 L18.98,6.01 L17.24,7.71 L17.66,9.08Z" fill="none" stroke="#5454e6" stroke-width="1.4" stroke-linejoin="round"/><circle cx="10.5" cy="10.5" r="3.0" fill="none" stroke="#5454e6" stroke-width="1.4"/></svg>
<div class="t" style="left:62.50px;top:605.04px;font-size:14.2px;color:#0a74d0;font-weight:bold;letter-spacing:0.15px;">actions</div>
<div class="t" style="left:62.50px;top:626.76px;font-size:11.7px;color:#6b6d85;">ID: R_kgDOMxxxxx</div>
<div class="abs" style="left:62.5px;top:626.66px;height:12px;white-space:nowrap;font-size:11.7px;line-height:12px;color:transparent">ID: R_kgDOMxxxxx<svg style="position:relative;left:5.5px;top:1px;display:inline-block" width="12" height="11" viewBox="0 0 12 11"><rect x="0.7" y="3.2" width="7.2" height="7.2" rx="1.2" fill="none" stroke="#4f5162" stroke-width="1.2"/><path d="M3.6,3.2 V1.9 A1.2,1.2 0 0 1 4.8,0.7 H10.1 A1.2,1.2 0 0 1 11.3,1.9 V7.1 A1.2,1.2 0 0 1 10.1,8.3 H7.9" fill="none" stroke="#4f5162" stroke-width="1.2"/></svg></div>
<div class="t" style="left:296.50px;top:599.78px;font-size:19px;color:#da1f1f;font-weight:bold;">12</div>
<div class="t" style="left:297.00px;top:625.30px;font-size:12px;color:#6b6d85;">Avg Score</div>
<div class="abs" style="left:363.5px;top:606.76px;width:1px;height:28px;background:#d9dae5"></div>
<div class="abs" style="left:383.5px;top:603.26px;width:31px;height:31px;border-radius:50%;background:#fff;box-shadow:0 0 2px 1px rgba(0,0,0,0.09)"></div>
<svg style="left:397.40px;top:596.96px" width="3.2" height="3.2" viewBox="0 0 3.2 3.2" ><circle cx="1.6" cy="1.6" r="1.45" fill="#e0201c"/></svg>
<div class="t" style="left:299.00px;width:200px;text-align:center;top:612.33px;font-size:13.5px;color:#e0201c;">0</div>
<div class="abs" style="left:437.7px;top:603.26px;width:31px;height:31px;border-radius:50%;background:#fff;box-shadow:0 0 2px 1px rgba(0,0,0,0.09)"></div>
<svg style="left:451.60px;top:596.96px" width="3.2" height="3.2" viewBox="0 0 3.2 3.2" ><circle cx="1.6" cy="1.6" r="1.45" fill="#e0201c"/></svg>
<div class="t" style="left:353.20px;width:200px;text-align:center;top:612.33px;font-size:13.5px;color:#e0201c;">0</div>
<div class="abs" style="left:546.3px;top:603.26px;width:31px;height:31px;border-radius:50%;background:#fff;box-shadow:0 0 2px 1px rgba(0,0,0,0.09)"></div>
<svg style="left:560.20px;top:596.96px" width="3.2" height="3.2" viewBox="0 0 3.2 3.2" ><circle cx="1.6" cy="1.6" r="1.45" fill="#e0201c"/></svg>
<div class="t" style="left:461.80px;width:200px;text-align:center;top:612.33px;font-size:13.5px;color:#e0201c;">0</div>
<div class="abs" style="left:600.2px;top:603.26px;width:31px;height:31px;border-radius:50%;background:#fff;box-shadow:0 0 2px 1px rgba(0,0,0,0.09)"></div>
<svg style="left:614.10px;top:596.96px" width="3.2" height="3.2" viewBox="0 0 3.2 3.2" ><circle cx="1.6" cy="1.6" r="1.45" fill="#e0201c"/></svg>
<div class="t" style="left:515.70px;width:200px;text-align:center;top:612.33px;font-size:13.5px;color:#e0201c;">0</div>
<div class="abs" style="left:492.0px;top:603.26px;width:31px;height:31px;border-radius:50%;background:#fff;box-shadow:0 0 2px 1px rgba(0,0,0,0.09)"></div>
<div class="abs" style="left:486.8px;top:597.56px;width:41.4px;height:41.4px;border-radius:50%;border:3.2px solid #16801b"></div>
<div class="t" style="left:407.50px;width:200px;text-align:center;top:612.13px;font-size:13.5px;color:#16801b;">100</div>
<div class="abs" style="left:647.2px;top:608.06px;width:30.2px;height:25.1px;background:#ebf8fe;border-radius:3px"></div>
<div class="t" style="left:562.30px;width:200px;text-align:center;top:615.33px;font-size:11.5px;color:#1a7fd8;text-shadow:0.3px 0 0 currentColor;">+ 8</div>
<svg style="left:753.00px;top:613.96px" width="14" height="14" viewBox="0 0 14 14" ><circle cx="7" cy="7" r="6.2" fill="none" stroke="#b4b5c6" stroke-width="1.1"/><text x="7" y="10" font-size="8.5" text-anchor="middle" fill="#9c9db2" font-family="Liberation Sans">?</text></svg>
<div class="t" style="left:778.40px;top:614.04px;font-size:14.2px;color:#1c1c28;">unknown</div>
<div class="abs" style="left:874px;top:621px;width:4.8px;height:2px;background:#50505c"></div>
<div class="abs" style="left:880.2px;top:621px;width:4.8px;height:2px;background:#50505c"></div>
<div class="abs" style="left:984px;top:621px;width:4.8px;height:2px;background:#50505c"></div>
<div class="abs" style="left:990.2px;top:621px;width:4.8px;height:2px;background:#50505c"></div>
<div class="abs" style="left:1141.2px;top:609.76px;width:93.4px;height:21.8px;background:#f3f4fa;border:1px solid #e4e5ef;border-radius:3px"></div>
<svg style="left:1150.50px;top:614.26px" width="11" height="12" viewBox="0 0 11 12" ><path d="M5.5,0.3 L10.7,3 L10.7,5.6 L5.5,8.3 L0.3,5.6 L0.3,3Z" fill="#0b0b2d"/><path d="M5.5,1.8 L8.4,3.3 L5.5,4.8 L2.6,3.3Z" fill="#f3f4fa"/><path d="M0.6,6.6 L5.5,9.2 L10.4,6.6 M0.6,8.6 L5.5,11.2 L10.4,8.6" fill="none" stroke="#0b0b2d" stroke-width="1.2"/></svg>
<div class="t" style="left:1167.30px;top:614.53px;font-size:12.2px;color:#0b0b2d;font-weight:bold;letter-spacing:-0.15px;">ACCOUNT</div>
<svg style="left:1360.00px;top:612.26px" width="18" height="17" viewBox="0 0 18 17" ><path d="M9,0.5 L11.6,6 L17.5,6.6 L13,10.6 L14.3,16.5 L9,13.4 L3.7,16.5 L5,10.6 L0.5,6.6 L6.4,6Z" fill="#d3d4e0"/></svg>
<svg style="left:1392.00px;top:614.36px" width="3.4" height="16" viewBox="0 0 3.4 16" ><circle cx="1.7" cy="1.6" r="1.45" fill="#4f5162"/><circle cx="1.7" cy="7.9" r="1.45" fill="#4f5162"/><circle cx="1.7" cy="14.2" r="1.45" fill="#4f5162"/></svg>
</div>
<div class="abs" style="left:228px;top:820.5px;width:878px;height:5.8px;background:#d5d5d8;border-radius:3px"></div>
<div class="abs" style="left:1661.3px;top:200.3px;width:7.8px;height:526px;background:#d0d1d5;border-radius:4px"></div>
<div class="t" style="left:240.50px;top:869.84px;font-size:12px;color:#1c1c28;letter-spacing:0.1px;text-shadow:0.3px 0 0 currentColor;">(1 - 10) of 1665</div>
<div class="abs" style="left:616px;top:859.6px;width:574.2px;height:31.5px;background:#fff;border:1px solid #eeeef4;border-radius:16px;box-shadow:0 0 2px rgba(0,0,0,0.06)"></div>
<svg style="left:636px;top:870.5px" width="10" height="10" viewBox="0 0 10 10" fill="none" stroke="#8f90a6" stroke-width="1.3"><path d="M9.5,5 H1 M5,1 L1,5 L5,9"/></svg>
<div class="t" style="left:651.00px;top:869.05px;font-size:14px;color:#8f90a6;letter-spacing:0.1px;">Prev</div>
<div class="abs" style="left:699.8px;top:860px;width:45.8px;height:30.8px;background:#0a8ee3"></div>
<div class="t" style="left:622.70px;width:200px;text-align:center;top:869.05px;font-size:14px;color:#ffffff;">1</div>
<div class="t" style="left:668.60px;width:200px;text-align:center;top:869.05px;font-size:14px;color:#0a74d0;">2</div>
<div class="t" style="left:716.40px;width:200px;text-align:center;top:869.05px;font-size:14px;color:#0a74d0;">3</div>
<div class="t" style="left:764.10px;width:200px;text-align:center;top:869.05px;font-size:14px;color:#0a74d0;">4</div>
<div class="t" style="left:811.40px;width:200px;text-align:center;top:869.05px;font-size:14px;color:#0a74d0;">5</div>
<div class="t" style="left:907.20px;width:200px;text-align:center;top:869.05px;font-size:14px;color:#0a74d0;">166</div>
<div class="t" style="left:970.00px;width:200px;text-align:center;top:869.05px;font-size:14px;color:#0a74d0;">167</div>
<div class="abs" style="left:950.2px;top:874px;width:3px;height:3px;border-radius:50%;background:#44465a"></div>
<div class="abs" style="left:954.6px;top:874px;width:3px;height:3px;border-radius:50%;background:#44465a"></div>
<div class="abs" style="left:959.0px;top:874px;width:3px;height:3px;border-radius:50%;background:#44465a"></div>
<div class="abs" style="left:792.1px;top:860.5px;width:1px;height:30px;background:#f0f0f5"></div>
<div class="abs" style="left:839.8px;top:860.5px;width:1px;height:30px;background:#f0f0f5"></div>
<div class="abs" style="left:887.5px;top:860.5px;width:1px;height:30px;background:#f0f0f5"></div>
<div class="abs" style="left:935.5px;top:860.5px;width:1px;height:30px;background:#f0f0f5"></div>
<div class="abs" style="left:975.7px;top:860.5px;width:1px;height:30px;background:#f0f0f5"></div>
<div class="abs" style="left:1038.5px;top:860.5px;width:1px;height:30px;background:#f0f0f5"></div>
<div class="abs" style="left:1101.3px;top:860.5px;width:1px;height:30px;background:#f0f0f5"></div>
<div class="t" style="left:1121.00px;top:869.05px;font-size:14px;color:#0a74d0;letter-spacing:0.1px;">Next</div>
<svg style="left:1159.5px;top:870.5px" width="11" height="10" viewBox="0 0 11 10" fill="none" stroke="#0a74d0" stroke-width="1.3"><path d="M0.5,5 H9.5 M5.5,1 L9.5,5 L5.5,9"/></svg>
<div class="abs" style="left:1531px;top:799px;width:94.5px;height:31px;border-radius:16px;background:linear-gradient(100deg,#f56a70,#c04fd0 25%,#5a4ff0 60%,#30c8f2);padding:1.3px">
<div style="width:100%;height:100%;border-radius:15px;background:#fff"></div></div>
<svg style="left:1543px;top:805px" width="19" height="19" viewBox="0 0 19 19">
 <defs><linearGradient id="ag" x1="0" y1="0" x2="0" y2="1"><stop offset="0" stop-color="#eab0f5"/><stop offset="1" stop-color="#d9a0ee"/></linearGradient></defs>
 <circle cx="9.5" cy="10.5" r="8" fill="url(#ag)"/>
 <circle cx="9.5" cy="1.8" r="1.2" fill="#c98be8"/>
 
 <circle cx="6" cy="9.5" r="1.7" fill="none" stroke="#3a2fd0" stroke-width="1.4"/><circle cx="13" cy="9.5" r="1.7" fill="none" stroke="#3a2fd0" stroke-width="1.4"/>
 <circle cx="9.5" cy="11" r="0.8" fill="#3a2fd0"/>
</svg>
<div class="t" style="left:1566px;top:807.95px;font-size:14px;letter-spacing:0.5px;text-shadow:none;background:linear-gradient(90deg,#d0409a,#5038e0 55%,#2f86e0);-webkit-background-clip:text;background-clip:text;color:transparent;line-height:1">Ask AI</div>
<div class="t" style="left:1491.00px;top:868.99px;font-size:13.6px;color:#6b6d85;">Show</div>
<div class="abs" style="left:1534px;top:860.3px;width:57.6px;height:30.5px;background:#fafbfd;border:1px solid #e3e4ec;border-radius:4px"></div>
<div class="t" style="left:1546.80px;top:868.00px;font-size:13px;color:#1c1c28;text-shadow:0.5px 0 0 currentColor;">10</div>
<svg style="left:1571px;top:874px" width="8" height="5" viewBox="0 0 8 5"><path d="M0.6,0.6 L4,4 L7.4,0.6" fill="none" stroke="#6b6d85" stroke-width="1.1"/></svg>
<div class="t" style="left:1599.50px;top:868.48px;font-size:14.2px;color:#6b6d85;">per page</div>
<svg style="left:770px;top:116px" width="26" height="40" viewBox="770 116 26 40"><path d="M773.6,120 L773.8,143.2 Q774.2,144.6 775.4,143.6 L780,139.2 L783.6,149.2 Q784.6,151.4 786.8,150.6 Q788.4,149.6 787.7,147.6 L784.3,138.6 L790.2,138.6 Q791.6,138.2 790.8,137 Z" fill="#050508" stroke="#050508" stroke-width="1" stroke-linejoin="round"/></svg>
</div>
</body></html>
